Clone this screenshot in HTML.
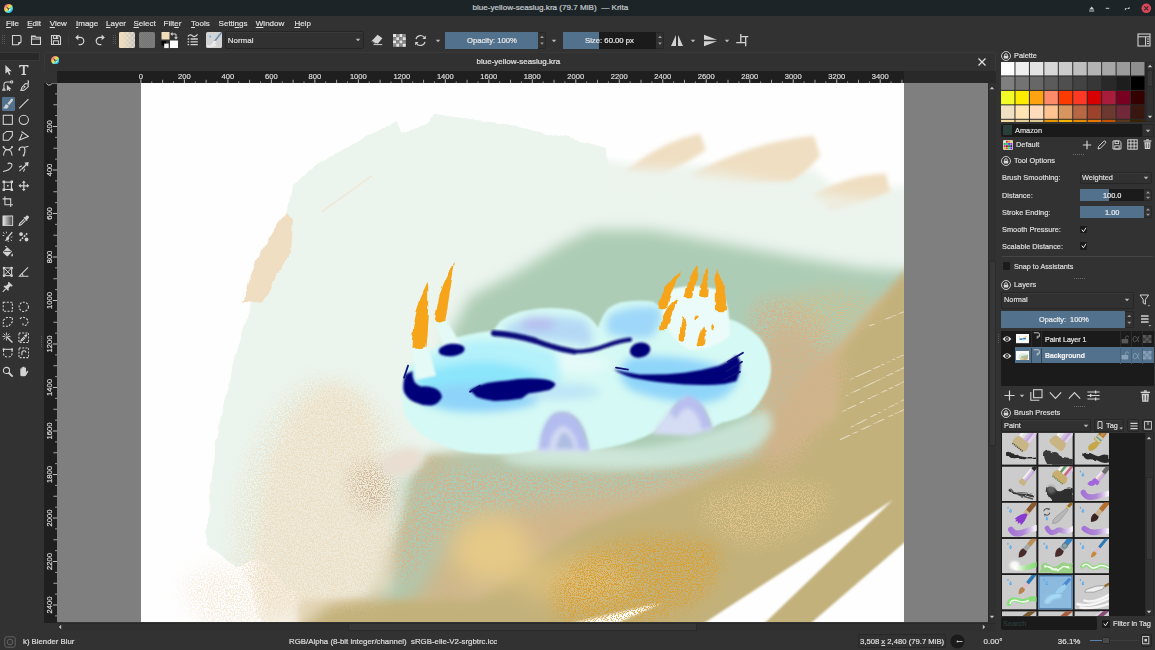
<!DOCTYPE html>
<html><head><meta charset="utf-8"><title>blue-yellow-seaslug.kra (79.7 MiB) — Krita</title>
<style>
*{box-sizing:border-box;margin:0;padding:0}
html,body{width:1155px;height:650px;overflow:hidden;background:#323232}
body{position:relative;font-family:"Liberation Sans",sans-serif;font-size:8px;color:#dedede}
.a{position:absolute}
.t{position:absolute;white-space:nowrap;line-height:12px;color:#dedede;transform:scaleX(.92);transform-origin:0 50%;-webkit-text-stroke:.22px currentColor}
#root{position:absolute;left:0;top:0;width:1155px;height:650px;opacity:.999}
svg{overflow:hidden;display:block}
u{text-decoration:underline;text-underline-offset:1px;text-decoration-thickness:0.6px}
</style></head><body><div id="root">

<div class="a" style="left:0px;top:0px;width:1155px;height:16px;background:#1d2529;"></div>
<svg class="a" style="left:3.5px;top:3.5px;" width="9" height="9" viewBox="0 0 9 9"><defs><linearGradient id="kg1" x1="0" y1="0" x2="1" y2="1"><stop offset="0" stop-color="#ff2fa0"/><stop offset=".45" stop-color="#f6e04a"/><stop offset=".7" stop-color="#30e0e8"/><stop offset="1" stop-color="#3a6cf0"/></linearGradient></defs><circle cx="4.5" cy="4.5" r="4.5" fill="url(#kg1)"/><path d="M2.025 2.475 L6.5249999999999995 5.175 L4.5 6.075 Z" fill="#2a2a3a"/><path d="M4.5 4.5 L7.2 5.8500000000000005 L5.3999999999999995 6.9750000000000005 Z" fill="#f4f4f4"/></svg>
<div class="t" style="left:472.5px;top:2.4px;font-size:8.1px;color:#c4c9cb;transform:scaleX(1);">blue-yellow-seaslug.kra (79.7 MiB) &nbsp;— Krita</div>
<svg class="a" style="left:1086px;top:2px;" width="66" height="12" viewBox="0 0 66 12"><path d="M3.2 7.6 L5.7 4.6 L8.2 7.6 Z M3.2 8.4 h5 v1 h-5z" fill="#c8cdd0"/>
<rect x="19.7" y="5.8" width="3.6" height="1" fill="#c8cdd0"/>
<path d="M39.3 4.3 h2.4 v2.4 z M43.2 8.9 h-2.4 v-2.4 z" fill="#c8cdd0" transform="rotate(90 41.2 6.6)"/>
<circle cx="60.3" cy="6.3" r="4.8" fill="#e0475a"/>
<path d="M58.3 4.3 l4 4 M62.3 4.3 l-4 4" stroke="#2a2f33" stroke-width="1.1"/></svg>
<div class="t" style="left:6px;top:17.6px;font-size:8px;color:#dedede;transform:scaleX(1);"><u>F</u>ile</div>
<div class="t" style="left:27.2px;top:17.6px;font-size:8px;color:#dedede;transform:scaleX(1);"><u>E</u>dit</div>
<div class="t" style="left:49.7px;top:17.6px;font-size:8px;color:#dedede;transform:scaleX(1);"><u>V</u>iew</div>
<div class="t" style="left:76px;top:17.6px;font-size:8px;color:#dedede;transform:scaleX(1);"><u>I</u>mage</div>
<div class="t" style="left:106px;top:17.6px;font-size:8px;color:#dedede;transform:scaleX(1);"><u>L</u>ayer</div>
<div class="t" style="left:133.5px;top:17.6px;font-size:8px;color:#dedede;transform:scaleX(1);"><u>S</u>elect</div>
<div class="t" style="left:163.6px;top:17.6px;font-size:8px;color:#dedede;transform:scaleX(1);">Filt<u>e</u>r</div>
<div class="t" style="left:191px;top:17.6px;font-size:8px;color:#dedede;transform:scaleX(1);"><u>T</u>ools</div>
<div class="t" style="left:218.6px;top:17.6px;font-size:8px;color:#dedede;transform:scaleX(1);">Setti<u>n</u>gs</div>
<div class="t" style="left:255.8px;top:17.6px;font-size:8px;color:#dedede;transform:scaleX(1);"><u>W</u>indow</div>
<div class="t" style="left:294.4px;top:17.6px;font-size:8px;color:#dedede;transform:scaleX(1);"><u>H</u>elp</div>
<svg class="a" style="left:2px;top:35px;" width="3" height="10" viewBox="0 0 3 10"><rect x="0" y="0" width="1" height="1" fill="#5a5a5a"/><rect x="2" y="0" width="1" height="1" fill="#5a5a5a"/><rect x="0" y="2" width="1" height="1" fill="#5a5a5a"/><rect x="2" y="2" width="1" height="1" fill="#5a5a5a"/><rect x="0" y="4" width="1" height="1" fill="#5a5a5a"/><rect x="2" y="4" width="1" height="1" fill="#5a5a5a"/><rect x="0" y="6" width="1" height="1" fill="#5a5a5a"/><rect x="2" y="6" width="1" height="1" fill="#5a5a5a"/><rect x="0" y="8" width="1" height="1" fill="#5a5a5a"/><rect x="2" y="8" width="1" height="1" fill="#5a5a5a"/></svg>
<svg class="a" style="left:112.5px;top:35px;" width="3" height="10" viewBox="0 0 3 10"><rect x="0" y="0" width="1" height="1" fill="#5a5a5a"/><rect x="2" y="0" width="1" height="1" fill="#5a5a5a"/><rect x="0" y="2" width="1" height="1" fill="#5a5a5a"/><rect x="2" y="2" width="1" height="1" fill="#5a5a5a"/><rect x="0" y="4" width="1" height="1" fill="#5a5a5a"/><rect x="2" y="4" width="1" height="1" fill="#5a5a5a"/><rect x="0" y="6" width="1" height="1" fill="#5a5a5a"/><rect x="2" y="6" width="1" height="1" fill="#5a5a5a"/><rect x="0" y="8" width="1" height="1" fill="#5a5a5a"/><rect x="2" y="8" width="1" height="1" fill="#5a5a5a"/></svg>
<svg class="a" style="left:11px;top:34px;" width="12" height="12" viewBox="0 0 12 12"><path d="M1.5 1.5 h7.2 a1.3 1.3 0 0 1 1.3 1.3 v5.2 l-2.8 2.8 h-5.7 z" fill="none" stroke="#d4d4d4" stroke-width="1.1"/><path d="M10 8 l-2.8 2.8 v-2.8 z" fill="#d4d4d4"/></svg>
<svg class="a" style="left:30px;top:34px;" width="12" height="12" viewBox="0 0 12 12"><path d="M1.5 2 h3.5 l1 1.2 h4.5 v7.3 h-9 z" fill="none" stroke="#d4d4d4" stroke-width="1.1"/><path d="M1.5 5 h9" stroke="#d4d4d4" stroke-width="1"/><path d="M1.5 2 h3.5 l1 1.2 h-4.5z" fill="#d4d4d4"/></svg>
<svg class="a" style="left:50px;top:34px;" width="12" height="12" viewBox="0 0 12 12"><path d="M1.5 1.5 h7.5 l1.5 1.5 v7.5 h-9 z" fill="none" stroke="#d4d4d4" stroke-width="1.1"/><rect x="3.6" y="1.5" width="4.2" height="3" fill="none" stroke="#d4d4d4" stroke-width="1"/><rect x="3.4" y="6.8" width="5" height="3.7" fill="none" stroke="#d4d4d4" stroke-width="1"/><rect x="5.8" y="2" width="1.2" height="2" fill="#d4d4d4"/></svg>
<div class="a" style="left:68px;top:35px;width:1px;height:10px;background:#3c3c3c;"></div>
<svg class="a" style="left:74px;top:33px;" width="12" height="13" viewBox="0 0 12 13"><path d="M3.2 4.4 h3 a3.6 3.6 0 0 1 0 7.2 h-1.6" fill="none" stroke="#d4d4d4" stroke-width="1.2"/><path d="M1.2 4.4 l3.2 -2.8 v5.6 z" fill="#d4d4d4"/></svg>
<svg class="a" style="left:94px;top:33px;" width="12" height="13" viewBox="0 0 12 13"><path d="M8.8 4.4 h-3 a3.6 3.6 0 0 0 0 7.2 h1.6" fill="none" stroke="#d4d4d4" stroke-width="1.2"/><path d="M10.8 4.4 l-3.2 -2.8 v5.6 z" fill="#d4d4d4"/></svg>
<svg class="a" style="left:119px;top:32px;" width="16" height="16" viewBox="0 0 16 16"><defs><pattern id="chk" width="4.8" height="4.8" patternUnits="userSpaceOnUse"><rect width="4.8" height="4.8" fill="#dedede"/><rect width="2.4" height="2.4" fill="#b2b2b2"/><rect x="2.4" y="2.4" width="2.4" height="2.4" fill="#b2b2b2"/></pattern><linearGradient id="pg" x1="0" x2="1"><stop offset="0" stop-color="#f2e0be"/><stop offset="0.25" stop-color="#f2e0be" stop-opacity=".85"/><stop offset="1" stop-color="#f2e0be" stop-opacity=".12"/></linearGradient></defs><rect width="16" height="16" rx="1.5" fill="url(#chk)"/><rect width="16" height="16" rx="1.5" fill="url(#pg)"/></svg>
<svg class="a" style="left:139px;top:32px;" width="16" height="16" viewBox="0 0 16 16"><defs><pattern id="chk2" width="2" height="2" patternUnits="userSpaceOnUse"><rect width="2" height="2" fill="#808080"/><rect width="1" height="1" fill="#767676"/><rect x="1" y="1" width="1" height="1" fill="#767676"/></pattern></defs><rect width="16" height="16" rx="1.5" fill="url(#chk2)"/></svg>
<svg class="a" style="left:161px;top:31px;" width="18" height="18" viewBox="0 0 18 18"><rect x="0.5" y="1" width="8" height="7.5" fill="#f1dfbc"/><rect x="9" y="9.5" width="8" height="7.5" fill="#ffffff"/><rect x="0.5" y="10" width="4.5" height="4.5" fill="#050505"/><rect x="3.2" y="12.6" width="4.5" height="4.5" fill="#f4f4f4"/><path d="M10.5 3 h4.5 v4" fill="none" stroke="#d4d4d4" stroke-width="1"/><path d="M9.2 3 l2.3 -2 v4 z M15 8.6 l-2 -2.3 h4 z" fill="#d4d4d4"/></svg>
<svg class="a" style="left:187px;top:33px;" width="12" height="14" viewBox="0 0 12 14"><path d="M0.8 3.4 q2.3 -2.6 4.6 -0.6 q2.3 2 5.2 -1.4" fill="none" stroke="#d4d4d4" stroke-width="1.2"/><path d="M3.6 6 h7.2 M3.6 8.8 h7.2 M3.6 11.6 h7.2" stroke="#d4d4d4" stroke-width="1.3"/><path d="M0.6 6 h1.6 M0.6 8.8 h1.6 M0.6 11.6 h1.6" stroke="#d4d4d4" stroke-width="1.3"/></svg>
<svg class="a" style="left:206px;top:32px;" width="16" height="16" viewBox="0 0 16 16"><rect width="16" height="16" rx="1.5" fill="#d4d4d4"/><path d="M15 1 L8.5 9.5" stroke="#6c8fb5" stroke-width="1.6"/><path d="M9.2 8.4 q-2.5 1 -4.5 5.6 q3.4 -1 5.6 -4.4z" fill="#f2f2f2"/><path d="M1 13.5 q4 2 9 -1" stroke="#ececec" stroke-width="1.8" fill="none"/><circle cx="4.2" cy="4.5" r="0.9" fill="#57b7f2"/></svg>
<div class="a" style="left:225px;top:31px;width:139px;height:17.5px;background:#323232;border:1px solid #262626;border-radius:2px;box-shadow:inset 0 1px 0 #3b3b3b"></div>
<div class="t" style="left:227.7px;top:34.7px;font-size:8px;color:#dedede;transform:scaleX(1);">Normal</div>
<svg class="a" style="left:354px;top:37.3px;" width="8" height="6" viewBox="0 0 8 6"><path d="M1.7000000000000002 1.85 h4.6 l-2.3 2.415 z" fill="#bcbcbc"/></svg>
<svg class="a" style="left:370px;top:34px;" width="14" height="12" viewBox="0 0 14 12"><path d="M7.6 0.8 l4.8 3.4 l-4.6 5.6 h-3.2 l-3.2 -2.6 z" fill="#d4d4d4"/><path d="M2.2 7.2 l3.2 2.6 h2" fill="none" stroke="#323232" stroke-width="0.9"/><path d="M3.6 10.6 h8.6" stroke="#d4d4d4" stroke-width="1"/></svg>
<svg class="a" style="left:393px;top:34px;" width="12.8" height="12.8" viewBox="0 0 12.8 12.8"><rect x="0.0" y="0.0" width="3.2" height="3.2" fill="#e6e6e6"/><rect x="3.2" y="0.0" width="3.2" height="3.2" fill="#8a8a8a"/><rect x="6.4" y="0.0" width="3.2" height="3.2" fill="#e6e6e6"/><rect x="9.600000000000001" y="0.0" width="3.2" height="3.2" fill="#8a8a8a"/><rect x="0.0" y="3.2" width="3.2" height="3.2" fill="#8a8a8a"/><rect x="3.2" y="3.2" width="3.2" height="3.2" fill="#e6e6e6"/><rect x="6.4" y="3.2" width="3.2" height="3.2" fill="#8a8a8a"/><rect x="9.600000000000001" y="3.2" width="3.2" height="3.2" fill="#e6e6e6"/><rect x="0.0" y="6.4" width="3.2" height="3.2" fill="#e6e6e6"/><rect x="3.2" y="6.4" width="3.2" height="3.2" fill="#8a8a8a"/><rect x="6.4" y="6.4" width="3.2" height="3.2" fill="#e6e6e6"/><rect x="9.600000000000001" y="6.4" width="3.2" height="3.2" fill="#8a8a8a"/><rect x="0.0" y="9.600000000000001" width="3.2" height="3.2" fill="#8a8a8a"/><rect x="3.2" y="9.600000000000001" width="3.2" height="3.2" fill="#e6e6e6"/><rect x="6.4" y="9.600000000000001" width="3.2" height="3.2" fill="#8a8a8a"/><rect x="9.600000000000001" y="9.600000000000001" width="3.2" height="3.2" fill="#e6e6e6"/></svg>
<svg class="a" style="left:414px;top:34px;" width="13" height="13" viewBox="0 0 13 13"><path d="M2 5.2 a4.7 4.7 0 0 1 8.6 -1.4" fill="none" stroke="#d4d4d4" stroke-width="1.2"/><path d="M11 7.8 a4.7 4.7 0 0 1 -8.6 1.4" fill="none" stroke="#d4d4d4" stroke-width="1.2"/><path d="M11.8 1.6 v3.4 h-3.4 z M1.2 11.4 v-3.4 h3.4 z" fill="#d4d4d4"/></svg>
<svg class="a" style="left:433.5px;top:37.5px;" width="8" height="6" viewBox="0 0 8 6"><path d="M1.7000000000000002 1.85 h4.6 l-2.3 2.415 z" fill="#bcbcbc"/></svg>
<div class="a" style="left:445px;top:32px;width:93px;height:16.5px;background:#53728e;"></div>
<div class="t" style="left:466.5px;top:34.7px;font-size:8px;color:#e8e8e8;transform:scaleX(0.96);">Opacity: 100%</div>
<div class="a" style="left:538px;top:32px;width:8px;height:16.5px;background:#323232;border:1px solid #292929;border-left:none;border-radius:0 2px 2px 0"></div>
<svg class="a" style="left:538px;top:32px;" width="8" height="16.5" viewBox="0 0 8 16.5"><path d="M2.0 5.9399999999999995 l2 -2.2 l2 2.2 z M2.0 10.56 l2 2.2 l2 -2.2 z" fill="#9a9a9a"/></svg>
<svg class="a" style="left:550px;top:37.5px;" width="8" height="6" viewBox="0 0 8 6"><path d="M1.7000000000000002 1.85 h4.6 l-2.3 2.415 z" fill="#bcbcbc"/></svg>
<div class="a" style="left:562.5px;top:32px;width:93.5px;height:16.5px;background:#1c1c1c;"></div>
<div class="a" style="left:562.5px;top:32px;width:36.5px;height:16.5px;background:#53728e;"></div>
<div class="t" style="left:584.5px;top:34.7px;font-size:8px;color:#e8e8e8;transform:scaleX(0.966);">Size: 60.00 px</div>
<div class="a" style="left:656px;top:32px;width:8px;height:16.5px;background:#323232;border:1px solid #292929;border-left:none;border-radius:0 2px 2px 0"></div>
<svg class="a" style="left:656px;top:32px;" width="8" height="16.5" viewBox="0 0 8 16.5"><path d="M2.0 5.9399999999999995 l2 -2.2 l2 2.2 z M2.0 10.56 l2 2.2 l2 -2.2 z" fill="#9a9a9a"/></svg>
<svg class="a" style="left:670px;top:34px;" width="14" height="13" viewBox="0 0 14 13"><path d="M6 1 v11 h-5 z" fill="#d4d4d4"/><path d="M8 1 v11 h5 z" fill="#d4d4d4"/></svg>
<svg class="a" style="left:689px;top:37.5px;" width="8" height="6" viewBox="0 0 8 6"><path d="M1.7000000000000002 1.85 h4.6 l-2.3 2.415 z" fill="#bcbcbc"/></svg>
<svg class="a" style="left:703px;top:34px;" width="15" height="13" viewBox="0 0 15 13"><path d="M1 5.7 h13 l-13 -5 z" fill="#d4d4d4"/><path d="M1 7.3 h13 l-13 5 z" fill="#d4d4d4"/></svg>
<svg class="a" style="left:722.6px;top:37.5px;" width="8" height="6" viewBox="0 0 8 6"><path d="M1.7000000000000002 1.85 h4.6 l-2.3 2.415 z" fill="#bcbcbc"/></svg>
<svg class="a" style="left:735px;top:34px;" width="14" height="13" viewBox="0 0 14 13"><path d="M5.8 0 v8.7 M1.2 8.7 h10 M5.2 2.7 h8.1 M10.7 2.7 v9.5" fill="none" stroke="#d4d4d4" stroke-width="1.3"/></svg>
<svg class="a" style="left:1137px;top:33px;" width="14" height="14" viewBox="0 0 14 14"><rect x="1" y="1" width="12" height="12" fill="none" stroke="#d4d4d4" stroke-width="1.1"/><path d="M1 3.8 h12 M8.6 3.8 v9" stroke="#d4d4d4" stroke-width="1"/><path d="M10 6 h2 M10 8.3 h2 M10 10.6 h2" stroke="#d4d4d4" stroke-width="1"/></svg>
<div class="a" style="left:0px;top:51.5px;width:39.5px;height:9px;background:#2a2a2a;border:1px solid #3a3a3a;border-left:none"></div>
<div class="a" style="left:41px;top:336px;width:1px;height:1px;background:#5c5c5c;"></div>
<div class="a" style="left:41px;top:338px;width:1px;height:1px;background:#5c5c5c;"></div>
<div class="a" style="left:41px;top:340px;width:1px;height:1px;background:#5c5c5c;"></div>
<div class="a" style="left:41px;top:342px;width:1px;height:1px;background:#5c5c5c;"></div>
<div class="a" style="left:41px;top:344px;width:1px;height:1px;background:#5c5c5c;"></div>
<div class="a" style="left:41px;top:346px;width:1px;height:1px;background:#5c5c5c;"></div>
<div class="a" style="left:1.5px;top:97px;width:13px;height:13.5px;background:#53728e;border-radius:1px"></div>
<svg class="a" style="left:2.0px;top:63.60000000000001px;" width="11.6" height="11.6" viewBox="0 0 12 12"><path d="M3.5 1 v9 l2.2 -2 l1.6 3.4 l1.4 -0.7 l-1.6 -3.2 h3 z" fill="#d4d4d4"/></svg>
<svg class="a" style="left:17.7px;top:63.60000000000001px;" width="11.6" height="11.6" viewBox="0 0 12 12"><path d="M1.2 1 h9.6 v2.6 h-0.9 q-0.2 -1.4 -1.4 -1.4 h-1.5 v7.6 q0 0.8 1.5 0.8 v0.8 h-5 v-0.8 q1.5 0 1.5 -0.8 v-7.6 h-1.5 q-1.2 0 -1.4 1.4 h-0.9 z" fill="#d4d4d4"/></svg>
<svg class="a" style="left:2.0px;top:79.7px;" width="11.6" height="11.6" viewBox="0 0 12 12"><path d="M2 10.5 v-5.5 q0 -3 3.2 -3 h4.4" fill="none" stroke="#d4d4d4" stroke-width="1.1"/><circle cx="2" cy="10.3" r="1.2" fill="none" stroke="#d4d4d4" stroke-width="1.1" stroke-width="0.8"/><circle cx="10" cy="2" r="1.2" fill="none" stroke="#d4d4d4" stroke-width="1.1" stroke-width="0.8"/><path d="M5 5 v6.4 l1.7 -1.5 l1.2 2.4 l1 -0.5 l-1.2 -2.3 h2.2 z" fill="#d4d4d4"/></svg>
<svg class="a" style="left:17.7px;top:79.7px;" width="11.6" height="11.6" viewBox="0 0 12 12"><path d="M10.5 1 l0.8 0.8 l-1.2 2 l0.6 3 l-4 3.6 l-3.9 1.2 l1.2 -3.9 l3.6 -4 l3 0.6 z" fill="none" stroke="#d4d4d4" stroke-width="1.1" stroke-width="1"/><path d="M3 11.2 l3.6 -3.8" stroke="#d4d4d4" stroke-width="0.9"/><circle cx="6.9" cy="7" r="0.9" fill="#d4d4d4"/></svg>
<svg class="a" style="left:2.0px;top:98.2px;" width="11.6" height="11.6" viewBox="0 0 12 12"><path d="M10.8 0.8 q1.2 0.8 0.3 2 l-3.6 4.4 l-1.9 -1.5 l3.6 -4.4 q0.8 -1 1.6 -0.5z" fill="#d4d4d4"/><path d="M5 6.4 l1.9 1.5 q-0.2 2.8 -3 3 q-1.8 0.2 -3 -0.6 q2 -0.6 2 -2.2 q0 -1.4 2.1 -1.7z" fill="#d4d4d4"/></svg>
<svg class="a" style="left:17.7px;top:98.2px;" width="11.6" height="11.6" viewBox="0 0 12 12"><path d="M1.2 10.8 L10.8 1.2" stroke="#d4d4d4" stroke-width="1.2"/></svg>
<svg class="a" style="left:2.0px;top:113.5px;" width="11.6" height="11.6" viewBox="0 0 12 12"><rect x="1.3" y="1.3" width="9.4" height="9.4" fill="none" stroke="#d4d4d4" stroke-width="1.1" stroke-width="1.2"/></svg>
<svg class="a" style="left:17.7px;top:113.5px;" width="11.6" height="11.6" viewBox="0 0 12 12"><circle cx="6" cy="6" r="4.8" fill="none" stroke="#d4d4d4" stroke-width="1.1" stroke-width="1.2"/></svg>
<svg class="a" style="left:2.0px;top:129.5px;" width="11.6" height="11.6" viewBox="0 0 12 12"><path d="M1.3 4.3 l3.5 -2.8 h5.9 v4.4 l-3.8 4.8 h-5.6 z" fill="none" stroke="#d4d4d4" stroke-width="1.1" stroke-width="1.2"/></svg>
<svg class="a" style="left:17.7px;top:129.5px;" width="11.6" height="11.6" viewBox="0 0 12 12"><path d="M3.6 1.6 L10.6 6.6 L1.4 10.4 L4.4 3.8" fill="none" stroke="#d4d4d4" stroke-width="1.1" stroke-width="1.2"/></svg>
<svg class="a" style="left:2.0px;top:145.2px;" width="11.6" height="11.6" viewBox="0 0 12 12"><path d="M1.6 11 q0.4 -6 4.4 -6 q4 0 4.4 6" fill="none" stroke="#d4d4d4" stroke-width="1.1" stroke-width="1.2"/><path d="M1.5 2.4 q2.2 2.6 4.5 2.6 q2.3 0 4.5 -2.6" fill="none" stroke="#d4d4d4" stroke-width="1.1" stroke-width="0.8"/><circle cx="1.6" cy="2" r="1" fill="#d4d4d4"/><circle cx="10.4" cy="2" r="1" fill="#d4d4d4"/></svg>
<svg class="a" style="left:17.7px;top:145.2px;" width="11.6" height="11.6" viewBox="0 0 12 12"><path d="M1.2 4.6 q0.6 -3 4 -2.4 q2 0.4 5.6 -1" fill="none" stroke="#d4d4d4" stroke-width="1.1" stroke-width="1.2"/><path d="M6.6 2.6 q1.6 4 -0.6 8" fill="none" stroke="#d4d4d4" stroke-width="1.1" stroke-width="1.2"/><circle cx="1.4" cy="5" r="1" fill="#d4d4d4"/><circle cx="5.8" cy="10.8" r="1" fill="#d4d4d4"/></svg>
<svg class="a" style="left:2.0px;top:161.2px;" width="11.6" height="11.6" viewBox="0 0 12 12"><path d="M1 10.8 q7 -1.2 9 -5.2 q1.2 -3 -2 -3.4 q-1.6 -0.1 -2 1" fill="none" stroke="#d4d4d4" stroke-width="1.1" stroke-width="1.2"/></svg>
<svg class="a" style="left:17.7px;top:161.2px;" width="11.6" height="11.6" viewBox="0 0 12 12"><path d="M11 1 l-0.6 4.6 l-1.4 -1.3 l-4.6 4.5 l-1 -1 l4.6 -4.5 l-1.4 -1.4 z" fill="#d4d4d4"/><path d="M1 6.4 l3 -1.4 M5.6 11 l1.4 -3 M1.4 10.6 l2.2 -2.2" stroke="#d4d4d4" stroke-width="1.1"/></svg>
<svg class="a" style="left:2.0px;top:179.89999999999998px;" width="11.6" height="11.6" viewBox="0 0 12 12"><rect x="2.2" y="2.2" width="7.6" height="7.6" fill="none" stroke="#d4d4d4" stroke-width="1.1" stroke-width="1.1"/><rect x="0.6" y="0.6" width="2.6" height="2.6" fill="#d4d4d4"/><rect x="8.8" y="0.6" width="2.6" height="2.6" fill="#d4d4d4"/><rect x="0.6" y="8.8" width="2.6" height="2.6" fill="#d4d4d4"/><rect x="8.8" y="8.8" width="2.6" height="2.6" fill="#d4d4d4"/><rect x="5.2" y="5.2" width="1.6" height="1.6" fill="#d4d4d4"/></svg>
<svg class="a" style="left:17.7px;top:179.89999999999998px;" width="11.6" height="11.6" viewBox="0 0 12 12"><path d="M6 0.4 l2 2.4 h-1.4 v2.6 h2.6 v-1.4 l2.4 2 l-2.4 2 v-1.4 h-2.6 v2.6 h1.4 l-2 2.4 l-2 -2.4 h1.4 v-2.6 h-2.6 v1.4 l-2.4 -2 l2.4 -2 v1.4 h2.6 v-2.6 h-1.4 z" fill="#d4d4d4"/></svg>
<svg class="a" style="left:2.0px;top:195.7px;" width="11.6" height="11.6" viewBox="0 0 12 12"><path d="M3 0.6 v8.4 h8.4 M0.6 3 h8.4 v8.4" fill="none" stroke="#d4d4d4" stroke-width="1.1" stroke-width="1.3"/></svg>
<svg class="a" style="left:2.0px;top:214.6px;" width="11.6" height="11.6" viewBox="0 0 12 12"><defs><linearGradient id="tg" x1="0" x2="1"><stop offset="0" stop-color="#e8e8e8"/><stop offset="1" stop-color="#444"/></linearGradient></defs><rect x="1" y="1" width="10" height="10" fill="url(#tg)" stroke="#d4d4d4" stroke-width="1"/></svg>
<svg class="a" style="left:17.7px;top:214.6px;" width="11.6" height="11.6" viewBox="0 0 12 12"><path d="M8.6 0.8 q1.6 -0.6 2.4 0.6 q0.8 1.2 -0.4 2.2 l-1.2 1 l0.6 0.7 l-0.9 0.9 l-3.4 -3.4 l0.9 -0.9 l0.7 0.6 z" fill="#d4d4d4"/><path d="M6.4 4.2 l-4.6 4.6 l-0.6 2 l2 -0.6 l4.6 -4.6" fill="none" stroke="#d4d4d4" stroke-width="1.1" stroke-width="1"/></svg>
<svg class="a" style="left:2.0px;top:230.5px;" width="11.6" height="11.6" viewBox="0 0 12 12"><path d="M10.6 1.2 l-4 4.6" stroke="#d4d4d4" stroke-width="1.4"/><path d="M6.4 5.4 q-2.4 0.4 -2 2.6 q-0.2 1.4 -1.8 1.8 q3.6 0.8 4.8 -1.6 q0.6 -1.6 -1 -2.8z" fill="#d4d4d4"/><path d="M1 1.4 l1.6 1.2 M4.4 0.6 l0.4 1.8 M0.6 4.6 l1.8 0.2 M10.8 6 l-1.6 0.6 M10.4 10.2 l-1.4 -1 M6.6 11.4 l-0.2 -1.4" stroke="#d4d4d4" stroke-width="0.9"/></svg>
<svg class="a" style="left:17.7px;top:230.5px;" width="11.6" height="11.6" viewBox="0 0 12 12"><path d="M1.8 10.2 L10.2 1.8" stroke="#d4d4d4" stroke-width="1.6" stroke-dasharray="2 1"/><circle cx="3.2" cy="3.2" r="2" fill="#d4d4d4"/><circle cx="8.8" cy="8.8" r="2" fill="#d4d4d4"/></svg>
<svg class="a" style="left:2.0px;top:246.2px;" width="11.6" height="11.6" viewBox="0 0 12 12"><path d="M5.4 1.2 l5 4.6 l-4.2 4.6 q-0.7 0.6 -1.4 0 l-3.6 -3.4 q-0.6 -0.7 0 -1.4 z" fill="#d4d4d4"/><path d="M1.8 5.6 h7.6" stroke="#323232" stroke-width="0.8"/><path d="M10.6 7.4 q1.4 2.2 0.4 3.2 q-1 0.6 -1.4 -0.6 q-0.2 -1 1 -2.6z" fill="#d4d4d4"/><path d="M5.2 1 l-2 -0.6" stroke="#d4d4d4" stroke-width="1"/></svg>
<svg class="a" style="left:2.0px;top:265.7px;" width="11.6" height="11.6" viewBox="0 0 12 12"><rect x="2" y="2" width="8" height="8" fill="none" stroke="#d4d4d4" stroke-width="1.1" stroke-width="1"/><path d="M2 2 l8 8 M10 2 l-8 8" stroke="#d4d4d4" stroke-width="1"/><circle cx="2" cy="2" r="1.3" fill="#d4d4d4"/><circle cx="10" cy="2" r="1.3" fill="#d4d4d4"/><circle cx="2" cy="10" r="1.3" fill="#d4d4d4"/><circle cx="10" cy="10" r="1.3" fill="#d4d4d4"/></svg>
<svg class="a" style="left:17.7px;top:265.7px;" width="11.6" height="11.6" viewBox="0 0 12 12"><path d="M10.4 1.4 L1.4 10.6 h9.4" fill="none" stroke="#d4d4d4" stroke-width="1.1" stroke-width="1.2"/><path d="M5.2 10.4 q0 -1.8 -1.4 -2.6" fill="none" stroke="#d4d4d4" stroke-width="1.1" stroke-width="0.9"/></svg>
<svg class="a" style="left:2.0px;top:281.2px;" width="11.6" height="11.6" viewBox="0 0 12 12"><path d="M7 0.8 l4.2 4.2 l-1 0.6 l-1.6 -0.2 l-1.8 2.2 l0.2 2 l-0.8 0.6 l-4.6 -4.6 l0.6 -0.8 l2 0.2 l2.2 -1.8 l-0.2 -1.6 z" fill="#d4d4d4"/><path d="M3.8 8.2 l-3 3" stroke="#d4d4d4" stroke-width="1.1"/></svg>
<svg class="a" style="left:2.0px;top:300.59999999999997px;" width="11.6" height="11.6" viewBox="0 0 12 12"><rect x="1.3" y="1.3" width="9.4" height="9.4" fill="none" stroke="#d4d4d4" stroke-width="1.1" stroke-width="1.2" stroke-dasharray="2.2 1.4"/></svg>
<svg class="a" style="left:17.7px;top:300.59999999999997px;" width="11.6" height="11.6" viewBox="0 0 12 12"><circle cx="6" cy="6" r="4.8" fill="none" stroke="#d4d4d4" stroke-width="1.1" stroke-width="1.2" stroke-dasharray="2.1 1.4"/></svg>
<svg class="a" style="left:2.0px;top:316.4px;" width="11.6" height="11.6" viewBox="0 0 12 12"><path d="M1.3 4.3 l3.5 -2.8 h5.9 v4.4 l-3.8 4.8 h-5.6 z" fill="none" stroke="#d4d4d4" stroke-width="1.1" stroke-width="1.2" stroke-dasharray="2.2 1.4"/></svg>
<svg class="a" style="left:17.7px;top:316.4px;" width="11.6" height="11.6" viewBox="0 0 12 12"><path d="M2 3 q3 -3 6.4 -0.6 q3.6 3 0.6 6.6 q-1.6 1.6 -3.4 0.4 q-1.4 -1.4 0.6 -2.6" fill="none" stroke="#d4d4d4" stroke-width="1.1" stroke-width="1.2" stroke-dasharray="2.2 1.4"/></svg>
<svg class="a" style="left:2.0px;top:331.59999999999997px;" width="11.6" height="11.6" viewBox="0 0 12 12"><path d="M4.6 4.6 l6.2 6.2" stroke="#d4d4d4" stroke-width="1.5"/><path d="M4.6 0.4 v3 M4.6 5.8 v3 M0.4 4.6 h3 M5.8 4.6 h3 M1.6 1.6 l2 2 M7.6 1.6 l-2 2 M1.6 7.6 l2 -2" stroke="#d4d4d4" stroke-width="0.9"/></svg>
<svg class="a" style="left:17.7px;top:331.59999999999997px;" width="11.6" height="11.6" viewBox="0 0 12 12"><rect x="1" y="1" width="10" height="10" fill="none" stroke="#d4d4d4" stroke-width="1.1" stroke-width="1.1" stroke-dasharray="2 1.4"/><path d="M8 2.4 q1 -0.4 1.5 0.4 q0.5 0.8 -0.3 1.4 l-0.6 0.5 l0.4 0.5 l-0.6 0.6 l-2.2 -2.2 l0.6 -0.6 l0.5 0.4 z" fill="#d4d4d4"/><path d="M6.6 4.8 l-3.2 3.2 l-0.4 1.3 l1.3 -0.4 l3.2 -3.2" fill="none" stroke="#d4d4d4" stroke-width="1.1" stroke-width="0.8"/></svg>
<svg class="a" style="left:2.0px;top:347.4px;" width="11.6" height="11.6" viewBox="0 0 12 12"><path d="M1.6 3 v3.4 q0 4 4.4 4 q4.4 0 4.4 -4 v-3.4" fill="none" stroke="#d4d4d4" stroke-width="1.1" stroke-width="1.2" stroke-dasharray="2.2 1.4"/><path d="M1.6 2.4 h8.8" fill="none" stroke="#d4d4d4" stroke-width="1.1" stroke-width="0.9"/><circle cx="1.6" cy="2.4" r="1.1" fill="#d4d4d4"/><circle cx="10.4" cy="2.4" r="1.1" fill="#d4d4d4"/></svg>
<svg class="a" style="left:17.7px;top:347.4px;" width="11.6" height="11.6" viewBox="0 0 12 12"><rect x="1" y="1" width="10" height="10" fill="none" stroke="#d4d4d4" stroke-width="1.1" stroke-width="1.1" stroke-dasharray="2 1.4"/><path d="M4 8.6 v-2.4 q0 -2.4 2.2 -2.4 q2 0 2 2" fill="none" stroke="#d4d4d4" stroke-width="1.1" stroke-width="1.4"/></svg>
<svg class="a" style="left:2.0px;top:366.2px;" width="11.6" height="11.6" viewBox="0 0 12 12"><circle cx="4.6" cy="4.6" r="3.2" fill="none" stroke="#d4d4d4" stroke-width="1.1" stroke-width="1.5"/><path d="M7 7 l4 4" stroke="#d4d4d4" stroke-width="2"/></svg>
<svg class="a" style="left:17.7px;top:366.2px;" width="11.6" height="11.6" viewBox="0 0 12 12"><path d="M2.4 6.8 v-3.6 q0 -0.8 0.7 -0.8 q0.7 0 0.7 0.8 v-1.4 q0 -0.8 0.7 -0.8 q0.8 0 0.8 0.8 v-0.4 q0 -0.8 0.8 -0.8 q0.7 0 0.7 0.8 v0.8 q0 -0.7 0.7 -0.7 q0.8 0 0.8 0.8 v4.4 l1 -1.4 q0.6 -0.6 1.1 -0.2 q0.4 0.4 0 1 l-2 3.6 q-0.6 1 -1.8 1 h-2.6 q-1.6 0 -1.6 -1.6 z" fill="#d4d4d4"/></svg>
<div class="a" style="left:44px;top:52px;width:952px;height:19px;background:#323232;border:1px solid #3a3a3a;border-bottom:none;border-radius:2px 2px 0 0"></div>
<svg class="a" style="left:51px;top:56px;" width="8.4" height="8.4" viewBox="0 0 8.4 8.4"><defs><linearGradient id="kg2" x1="0" y1="0" x2="1" y2="1"><stop offset="0" stop-color="#ff2fa0"/><stop offset=".45" stop-color="#f6e04a"/><stop offset=".7" stop-color="#30e0e8"/><stop offset="1" stop-color="#3a6cf0"/></linearGradient></defs><circle cx="4.2" cy="4.2" r="4.2" fill="url(#kg2)"/><path d="M1.8900000000000001 2.3100000000000005 L6.09 4.83 L4.2 5.670000000000001 Z" fill="#2a2a3a"/><path d="M4.2 4.2 L6.720000000000001 5.460000000000001 L5.04 6.510000000000001 Z" fill="#f4f4f4"/></svg>
<div class="t" style="left:476.5px;top:55.6px;font-size:8px;color:#e0e0e0;transform:scaleX(1);">blue-yellow-seaslug.kra</div>
<svg class="a" style="left:977px;top:57px;" width="10" height="10" viewBox="0 0 10 10"><path d="M1.5 1.5 l7 7 M8.5 1.5 l-7 7" stroke="#e4e4e4" stroke-width="1.2"/></svg>
<div class="a" style="left:57px;top:71px;width:939px;height:12.3px;background:#2a2a2a;"></div>
<div class="a" style="left:57px;top:71px;width:847px;height:12.3px;background:#202020;"></div>
<div class="a" style="left:44px;top:83px;width:13px;height:539.5px;background:#202020;"></div>
<svg class="a" style="left:57px;top:71px;" width="939" height="12.3" viewBox="0 0 939 12.3"><rect x="83.30" y="8.2" width="1" height="4.2" fill="#bdbdbd"/><text x="83.80" y="7.9" text-anchor="middle" font-size="7.6" fill="#dcdcdc" stroke="#dcdcdc" stroke-width="0.2" font-family="Liberation Sans, sans-serif">0</text><rect x="94.18" y="10.4" width="1" height="2" fill="#9a9a9a"/><rect x="105.05" y="8.8" width="1" height="3.6" fill="#a8a8a8"/><rect x="115.93" y="10.4" width="1" height="2" fill="#9a9a9a"/><rect x="126.80" y="8.2" width="1" height="4.2" fill="#bdbdbd"/><text x="127.30" y="7.9" text-anchor="middle" font-size="7.6" fill="#dcdcdc" stroke="#dcdcdc" stroke-width="0.2" font-family="Liberation Sans, sans-serif">200</text><rect x="137.68" y="10.4" width="1" height="2" fill="#9a9a9a"/><rect x="148.55" y="8.8" width="1" height="3.6" fill="#a8a8a8"/><rect x="159.43" y="10.4" width="1" height="2" fill="#9a9a9a"/><rect x="170.30" y="8.2" width="1" height="4.2" fill="#bdbdbd"/><text x="170.80" y="7.9" text-anchor="middle" font-size="7.6" fill="#dcdcdc" stroke="#dcdcdc" stroke-width="0.2" font-family="Liberation Sans, sans-serif">400</text><rect x="181.18" y="10.4" width="1" height="2" fill="#9a9a9a"/><rect x="192.05" y="8.8" width="1" height="3.6" fill="#a8a8a8"/><rect x="202.93" y="10.4" width="1" height="2" fill="#9a9a9a"/><rect x="213.80" y="8.2" width="1" height="4.2" fill="#bdbdbd"/><text x="214.30" y="7.9" text-anchor="middle" font-size="7.6" fill="#dcdcdc" stroke="#dcdcdc" stroke-width="0.2" font-family="Liberation Sans, sans-serif">600</text><rect x="224.68" y="10.4" width="1" height="2" fill="#9a9a9a"/><rect x="235.55" y="8.8" width="1" height="3.6" fill="#a8a8a8"/><rect x="246.43" y="10.4" width="1" height="2" fill="#9a9a9a"/><rect x="257.30" y="8.2" width="1" height="4.2" fill="#bdbdbd"/><text x="257.80" y="7.9" text-anchor="middle" font-size="7.6" fill="#dcdcdc" stroke="#dcdcdc" stroke-width="0.2" font-family="Liberation Sans, sans-serif">800</text><rect x="268.18" y="10.4" width="1" height="2" fill="#9a9a9a"/><rect x="279.05" y="8.8" width="1" height="3.6" fill="#a8a8a8"/><rect x="289.93" y="10.4" width="1" height="2" fill="#9a9a9a"/><rect x="300.80" y="8.2" width="1" height="4.2" fill="#bdbdbd"/><text x="301.30" y="7.9" text-anchor="middle" font-size="7.6" fill="#dcdcdc" stroke="#dcdcdc" stroke-width="0.2" font-family="Liberation Sans, sans-serif">1000</text><rect x="311.68" y="10.4" width="1" height="2" fill="#9a9a9a"/><rect x="322.55" y="8.8" width="1" height="3.6" fill="#a8a8a8"/><rect x="333.43" y="10.4" width="1" height="2" fill="#9a9a9a"/><rect x="344.30" y="8.2" width="1" height="4.2" fill="#bdbdbd"/><text x="344.80" y="7.9" text-anchor="middle" font-size="7.6" fill="#dcdcdc" stroke="#dcdcdc" stroke-width="0.2" font-family="Liberation Sans, sans-serif">1200</text><rect x="355.18" y="10.4" width="1" height="2" fill="#9a9a9a"/><rect x="366.05" y="8.8" width="1" height="3.6" fill="#a8a8a8"/><rect x="376.93" y="10.4" width="1" height="2" fill="#9a9a9a"/><rect x="387.80" y="8.2" width="1" height="4.2" fill="#bdbdbd"/><text x="388.30" y="7.9" text-anchor="middle" font-size="7.6" fill="#dcdcdc" stroke="#dcdcdc" stroke-width="0.2" font-family="Liberation Sans, sans-serif">1400</text><rect x="398.68" y="10.4" width="1" height="2" fill="#9a9a9a"/><rect x="409.55" y="8.8" width="1" height="3.6" fill="#a8a8a8"/><rect x="420.43" y="10.4" width="1" height="2" fill="#9a9a9a"/><rect x="431.30" y="8.2" width="1" height="4.2" fill="#bdbdbd"/><text x="431.80" y="7.9" text-anchor="middle" font-size="7.6" fill="#dcdcdc" stroke="#dcdcdc" stroke-width="0.2" font-family="Liberation Sans, sans-serif">1600</text><rect x="442.18" y="10.4" width="1" height="2" fill="#9a9a9a"/><rect x="453.05" y="8.8" width="1" height="3.6" fill="#a8a8a8"/><rect x="463.92" y="10.4" width="1" height="2" fill="#9a9a9a"/><rect x="474.80" y="8.2" width="1" height="4.2" fill="#bdbdbd"/><text x="475.30" y="7.9" text-anchor="middle" font-size="7.6" fill="#dcdcdc" stroke="#dcdcdc" stroke-width="0.2" font-family="Liberation Sans, sans-serif">1800</text><rect x="485.67" y="10.4" width="1" height="2" fill="#9a9a9a"/><rect x="496.55" y="8.8" width="1" height="3.6" fill="#a8a8a8"/><rect x="507.42" y="10.4" width="1" height="2" fill="#9a9a9a"/><rect x="518.30" y="8.2" width="1" height="4.2" fill="#bdbdbd"/><text x="518.80" y="7.9" text-anchor="middle" font-size="7.6" fill="#dcdcdc" stroke="#dcdcdc" stroke-width="0.2" font-family="Liberation Sans, sans-serif">2000</text><rect x="529.17" y="10.4" width="1" height="2" fill="#9a9a9a"/><rect x="540.05" y="8.8" width="1" height="3.6" fill="#a8a8a8"/><rect x="550.92" y="10.4" width="1" height="2" fill="#9a9a9a"/><rect x="561.80" y="8.2" width="1" height="4.2" fill="#bdbdbd"/><text x="562.30" y="7.9" text-anchor="middle" font-size="7.6" fill="#dcdcdc" stroke="#dcdcdc" stroke-width="0.2" font-family="Liberation Sans, sans-serif">2200</text><rect x="572.67" y="10.4" width="1" height="2" fill="#9a9a9a"/><rect x="583.55" y="8.8" width="1" height="3.6" fill="#a8a8a8"/><rect x="594.42" y="10.4" width="1" height="2" fill="#9a9a9a"/><rect x="605.30" y="8.2" width="1" height="4.2" fill="#bdbdbd"/><text x="605.80" y="7.9" text-anchor="middle" font-size="7.6" fill="#dcdcdc" stroke="#dcdcdc" stroke-width="0.2" font-family="Liberation Sans, sans-serif">2400</text><rect x="616.17" y="10.4" width="1" height="2" fill="#9a9a9a"/><rect x="627.05" y="8.8" width="1" height="3.6" fill="#a8a8a8"/><rect x="637.92" y="10.4" width="1" height="2" fill="#9a9a9a"/><rect x="648.80" y="8.2" width="1" height="4.2" fill="#bdbdbd"/><text x="649.30" y="7.9" text-anchor="middle" font-size="7.6" fill="#dcdcdc" stroke="#dcdcdc" stroke-width="0.2" font-family="Liberation Sans, sans-serif">2600</text><rect x="659.67" y="10.4" width="1" height="2" fill="#9a9a9a"/><rect x="670.55" y="8.8" width="1" height="3.6" fill="#a8a8a8"/><rect x="681.42" y="10.4" width="1" height="2" fill="#9a9a9a"/><rect x="692.30" y="8.2" width="1" height="4.2" fill="#bdbdbd"/><text x="692.80" y="7.9" text-anchor="middle" font-size="7.6" fill="#dcdcdc" stroke="#dcdcdc" stroke-width="0.2" font-family="Liberation Sans, sans-serif">2800</text><rect x="703.17" y="10.4" width="1" height="2" fill="#9a9a9a"/><rect x="714.05" y="8.8" width="1" height="3.6" fill="#a8a8a8"/><rect x="724.92" y="10.4" width="1" height="2" fill="#9a9a9a"/><rect x="735.80" y="8.2" width="1" height="4.2" fill="#bdbdbd"/><text x="736.30" y="7.9" text-anchor="middle" font-size="7.6" fill="#dcdcdc" stroke="#dcdcdc" stroke-width="0.2" font-family="Liberation Sans, sans-serif">3000</text><rect x="746.67" y="10.4" width="1" height="2" fill="#9a9a9a"/><rect x="757.55" y="8.8" width="1" height="3.6" fill="#a8a8a8"/><rect x="768.42" y="10.4" width="1" height="2" fill="#9a9a9a"/><rect x="779.30" y="8.2" width="1" height="4.2" fill="#bdbdbd"/><text x="779.80" y="7.9" text-anchor="middle" font-size="7.6" fill="#dcdcdc" stroke="#dcdcdc" stroke-width="0.2" font-family="Liberation Sans, sans-serif">3200</text><rect x="790.17" y="10.4" width="1" height="2" fill="#9a9a9a"/><rect x="801.05" y="8.8" width="1" height="3.6" fill="#a8a8a8"/><rect x="811.92" y="10.4" width="1" height="2" fill="#9a9a9a"/><rect x="822.80" y="8.2" width="1" height="4.2" fill="#bdbdbd"/><text x="823.30" y="7.9" text-anchor="middle" font-size="7.6" fill="#dcdcdc" stroke="#dcdcdc" stroke-width="0.2" font-family="Liberation Sans, sans-serif">3400</text><rect x="833.67" y="10.4" width="1" height="2" fill="#9a9a9a"/><rect x="844.55" y="8.8" width="1" height="3.6" fill="#a8a8a8"/></svg>
<svg class="a" style="left:44px;top:83px;" width="13" height="539.5" viewBox="0 0 13 539.5"><rect x="8.8" y="-0.50" width="4.2" height="1" fill="#bdbdbd"/><rect x="11" y="10.38" width="2" height="1" fill="#9a9a9a"/><rect x="9.4" y="21.25" width="3.6" height="1" fill="#a8a8a8"/><rect x="11" y="32.12" width="2" height="1" fill="#9a9a9a"/><rect x="8.8" y="43.00" width="4.2" height="1" fill="#bdbdbd"/><text transform="translate(7.6,43.50) rotate(-90)" text-anchor="middle" font-size="7.6" fill="#dcdcdc" stroke="#dcdcdc" stroke-width="0.2" font-family="Liberation Sans, sans-serif">200</text><rect x="11" y="53.88" width="2" height="1" fill="#9a9a9a"/><rect x="9.4" y="64.75" width="3.6" height="1" fill="#a8a8a8"/><rect x="11" y="75.62" width="2" height="1" fill="#9a9a9a"/><rect x="8.8" y="86.50" width="4.2" height="1" fill="#bdbdbd"/><text transform="translate(7.6,87.00) rotate(-90)" text-anchor="middle" font-size="7.6" fill="#dcdcdc" stroke="#dcdcdc" stroke-width="0.2" font-family="Liberation Sans, sans-serif">400</text><rect x="11" y="97.38" width="2" height="1" fill="#9a9a9a"/><rect x="9.4" y="108.25" width="3.6" height="1" fill="#a8a8a8"/><rect x="11" y="119.12" width="2" height="1" fill="#9a9a9a"/><rect x="8.8" y="130.00" width="4.2" height="1" fill="#bdbdbd"/><text transform="translate(7.6,130.50) rotate(-90)" text-anchor="middle" font-size="7.6" fill="#dcdcdc" stroke="#dcdcdc" stroke-width="0.2" font-family="Liberation Sans, sans-serif">600</text><rect x="11" y="140.88" width="2" height="1" fill="#9a9a9a"/><rect x="9.4" y="151.75" width="3.6" height="1" fill="#a8a8a8"/><rect x="11" y="162.62" width="2" height="1" fill="#9a9a9a"/><rect x="8.8" y="173.50" width="4.2" height="1" fill="#bdbdbd"/><text transform="translate(7.6,174.00) rotate(-90)" text-anchor="middle" font-size="7.6" fill="#dcdcdc" stroke="#dcdcdc" stroke-width="0.2" font-family="Liberation Sans, sans-serif">800</text><rect x="11" y="184.38" width="2" height="1" fill="#9a9a9a"/><rect x="9.4" y="195.25" width="3.6" height="1" fill="#a8a8a8"/><rect x="11" y="206.12" width="2" height="1" fill="#9a9a9a"/><rect x="8.8" y="217.00" width="4.2" height="1" fill="#bdbdbd"/><text transform="translate(7.6,217.50) rotate(-90)" text-anchor="middle" font-size="7.6" fill="#dcdcdc" stroke="#dcdcdc" stroke-width="0.2" font-family="Liberation Sans, sans-serif">1000</text><rect x="11" y="227.88" width="2" height="1" fill="#9a9a9a"/><rect x="9.4" y="238.75" width="3.6" height="1" fill="#a8a8a8"/><rect x="11" y="249.62" width="2" height="1" fill="#9a9a9a"/><rect x="8.8" y="260.50" width="4.2" height="1" fill="#bdbdbd"/><text transform="translate(7.6,261.00) rotate(-90)" text-anchor="middle" font-size="7.6" fill="#dcdcdc" stroke="#dcdcdc" stroke-width="0.2" font-family="Liberation Sans, sans-serif">1200</text><rect x="11" y="271.38" width="2" height="1" fill="#9a9a9a"/><rect x="9.4" y="282.25" width="3.6" height="1" fill="#a8a8a8"/><rect x="11" y="293.12" width="2" height="1" fill="#9a9a9a"/><rect x="8.8" y="304.00" width="4.2" height="1" fill="#bdbdbd"/><text transform="translate(7.6,304.50) rotate(-90)" text-anchor="middle" font-size="7.6" fill="#dcdcdc" stroke="#dcdcdc" stroke-width="0.2" font-family="Liberation Sans, sans-serif">1400</text><rect x="11" y="314.88" width="2" height="1" fill="#9a9a9a"/><rect x="9.4" y="325.75" width="3.6" height="1" fill="#a8a8a8"/><rect x="11" y="336.62" width="2" height="1" fill="#9a9a9a"/><rect x="8.8" y="347.50" width="4.2" height="1" fill="#bdbdbd"/><text transform="translate(7.6,348.00) rotate(-90)" text-anchor="middle" font-size="7.6" fill="#dcdcdc" stroke="#dcdcdc" stroke-width="0.2" font-family="Liberation Sans, sans-serif">1600</text><rect x="11" y="358.38" width="2" height="1" fill="#9a9a9a"/><rect x="9.4" y="369.25" width="3.6" height="1" fill="#a8a8a8"/><rect x="11" y="380.12" width="2" height="1" fill="#9a9a9a"/><rect x="8.8" y="391.00" width="4.2" height="1" fill="#bdbdbd"/><text transform="translate(7.6,391.50) rotate(-90)" text-anchor="middle" font-size="7.6" fill="#dcdcdc" stroke="#dcdcdc" stroke-width="0.2" font-family="Liberation Sans, sans-serif">1800</text><rect x="11" y="401.88" width="2" height="1" fill="#9a9a9a"/><rect x="9.4" y="412.75" width="3.6" height="1" fill="#a8a8a8"/><rect x="11" y="423.62" width="2" height="1" fill="#9a9a9a"/><rect x="8.8" y="434.50" width="4.2" height="1" fill="#bdbdbd"/><text transform="translate(7.6,435.00) rotate(-90)" text-anchor="middle" font-size="7.6" fill="#dcdcdc" stroke="#dcdcdc" stroke-width="0.2" font-family="Liberation Sans, sans-serif">2000</text><rect x="11" y="445.38" width="2" height="1" fill="#9a9a9a"/><rect x="9.4" y="456.25" width="3.6" height="1" fill="#a8a8a8"/><rect x="11" y="467.12" width="2" height="1" fill="#9a9a9a"/><rect x="8.8" y="478.00" width="4.2" height="1" fill="#bdbdbd"/><text transform="translate(7.6,478.50) rotate(-90)" text-anchor="middle" font-size="7.6" fill="#dcdcdc" stroke="#dcdcdc" stroke-width="0.2" font-family="Liberation Sans, sans-serif">2200</text><rect x="11" y="488.88" width="2" height="1" fill="#9a9a9a"/><rect x="9.4" y="499.75" width="3.6" height="1" fill="#a8a8a8"/><rect x="11" y="510.62" width="2" height="1" fill="#9a9a9a"/><rect x="8.8" y="521.50" width="4.2" height="1" fill="#bdbdbd"/><text transform="translate(7.6,522.00) rotate(-90)" text-anchor="middle" font-size="7.6" fill="#dcdcdc" stroke="#dcdcdc" stroke-width="0.2" font-family="Liberation Sans, sans-serif">2400</text><rect x="11" y="532.38" width="2" height="1" fill="#9a9a9a"/><path d="M2.5 0.5 q1.8 2.6 4.2 1.2 q1.2 -0.8 1.6 -1.4" fill="none" stroke="#dcdcdc" stroke-width="0.9"/></svg>
<div class="a" style="left:57px;top:83.3px;width:931px;height:539.2px;background:#808080;"></div>
<div class="a" style="left:988px;top:83.3px;width:8.3px;height:539.2px;background:#313131;border-left:1px solid #2a2a2a"></div>
<div class="a" style="left:989px;top:261px;width:7px;height:185px;background:#383838;border:1px solid #2b2b2b;border-radius:1px"></div>
<svg class="a" style="left:988px;top:84px;" width="8" height="8" viewBox="0 0 8 8"><path d="M1.8 5.2 l2.2 -2.4 l2.2 2.4 z" fill="#c8c8c8"/></svg>
<svg class="a" style="left:988px;top:613px;" width="8" height="8" viewBox="0 0 8 8"><path d="M1.8 2.8 l2.2 2.4 l2.2 -2.4 z" fill="#c8c8c8"/></svg>
<div class="a" style="left:57px;top:622.6px;width:939px;height:8px;background:#313131;border-top:1px solid #2a2a2a"></div>
<div class="a" style="left:347.5px;top:623.2px;width:349px;height:7.4px;background:#383838;border:1px solid #2b2b2b;border-radius:1px"></div>
<svg class="a" style="left:56px;top:623px;" width="8" height="8" viewBox="0 0 8 8"><path d="M5.2 1.8 l-2.4 2.2 l2.4 2.2 z" fill="#c8c8c8"/></svg>
<svg class="a" style="left:979.5px;top:623px;" width="8" height="8" viewBox="0 0 8 8"><path d="M2.8 1.8 l2.4 2.2 l-2.4 2.2 z" fill="#c8c8c8"/></svg>
<svg class="a" style="left:141px;top:83.3px" width="763" height="539.2" viewBox="141 83.3 763 539.2"><defs>
<filter id="b1" x="-20%" y="-20%" width="140%" height="140%"><feGaussianBlur stdDeviation="1"/></filter>
<filter id="b2" x="-20%" y="-20%" width="140%" height="140%"><feGaussianBlur stdDeviation="2.2"/></filter>
<filter id="b4" x="-20%" y="-20%" width="140%" height="140%"><feGaussianBlur stdDeviation="4"/></filter>
<filter id="b7" x="-30%" y="-30%" width="160%" height="160%"><feGaussianBlur stdDeviation="7"/></filter>
<filter id="b12" x="-40%" y="-40%" width="180%" height="180%"><feGaussianBlur stdDeviation="12"/></filter>
<filter id="rough" x="-10%" y="-10%" width="120%" height="120%"><feTurbulence type="fractalNoise" baseFrequency="0.05" numOctaves="3" seed="4" result="n"/><feDisplacementMap in="SourceGraphic" in2="n" scale="6" xChannelSelector="R" yChannelSelector="G"/><feGaussianBlur stdDeviation="0.7"/></filter>
<filter id="rough2" x="-10%" y="-10%" width="120%" height="120%"><feTurbulence type="fractalNoise" baseFrequency="0.06" numOctaves="2" seed="9" result="n"/><feDisplacementMap in="SourceGraphic" in2="n" scale="6" xChannelSelector="R" yChannelSelector="G"/><feGaussianBlur stdDeviation="0.5"/></filter>
<filter id="speck" x="-20%" y="-20%" width="140%" height="140%"><feGaussianBlur in="SourceGraphic" stdDeviation="9" result="bl"/><feTurbulence type="fractalNoise" baseFrequency="0.85" numOctaves="2" seed="3" result="n"/><feColorMatrix in="n" type="matrix" values="0 0 0 0 0  0 0 0 0 0  0 0 0 0 0  0 0 0 9 -4.3" result="dots"/><feComposite in="bl" in2="dots" operator="in"/></filter>
<filter id="speck2" x="-20%" y="-20%" width="140%" height="140%"><feGaussianBlur in="SourceGraphic" stdDeviation="10" result="bl"/><feTurbulence type="fractalNoise" baseFrequency="0.7" numOctaves="2" seed="11" result="n"/><feColorMatrix in="n" type="matrix" values="0 0 0 0 0  0 0 0 0 0  0 0 0 0 0  0 0 0 7 -3.0" result="dots"/><feComposite in="bl" in2="dots" operator="in"/></filter>
<filter id="spk50" x="-20%" y="-20%" width="140%" height="140%"><feGaussianBlur in="SourceGraphic" stdDeviation="8" result="bl"/><feTurbulence type="fractalNoise" baseFrequency="0.55" numOctaves="2" seed="21" result="n"/><feColorMatrix in="n" type="matrix" values="0 0 0 0 0  0 0 0 0 0  0 0 0 0 0  0 0 0 8 -3.6" result="dots"/><feComposite in="bl" in2="dots" operator="in"/></filter>
<filter id="streak" x="-10%" y="-10%" width="120%" height="120%"><feTurbulence type="fractalNoise" baseFrequency="0.02 0.5" numOctaves="2" seed="5" result="n"/><feColorMatrix in="n" type="matrix" values="0 0 0 0 0  0 0 0 0 0  0 0 0 0 0  0 0 0 6 -2.2" result="m"/><feComposite in="SourceGraphic" in2="m" operator="in"/></filter>
</defs>
<rect x="141" y="83" width="763" height="540" fill="#ffffff"/>
<g filter="url(#rough)">
<path d="M206 566 L208 517 L215 443 L230 377 L250 307 L262 270 L287 215 L292 186 L322 161 L397 121 L400 132 L428 124 L433 114 L523 127 L607 148 L608 166 L640 190 L910 215 L910 630 L330 630 L300 600 L262 560 L240 566 Z" fill="#ecf5ee"/>
</g>
<g filter="url(#b4)"><path d="M604 160 L640 168 L700 166 L760 172 L815 170 L840 194 L910 186 L910 230 L604 200 Z" fill="#ecf5ee"/></g>
<g filter="url(#rough2)">
<path d="M242 302 L256 262 L276 228 L286 213 L292 222 L290 252 L274 282 L262 304 Z" fill="#f0dfc2"/>
</g>
<path d="M322 212 L372 176" stroke="#f3e6d2" stroke-width="1.6" opacity=".8"/>
<g filter="url(#b2)">
<path d="M625 172 Q660 142 700 134 L706 150 Q690 162 660 176 Z" fill="#f0dfc2"/>
<path d="M690 176 Q750 142 814 136 L820 156 Q808 172 790 182 Q750 184 705 188 Z" fill="#f0dfc2"/>
<path d="M812 196 Q850 174 886 174 L890 192 Q866 204 832 210 Z" fill="#f0dfc2"/>
</g>
<g filter="url(#b7)"><path d="M600 170 Q700 165 800 190 Q860 205 904 200 L904 215 L600 195 Z" fill="#eef5ef"/></g>
<g filter="url(#b7)">
<path d="M448 338 L470 297 L514 274 L563 244 L592 230 L650 230 L720 243 L800 258 L860 268 L915 272 L915 470 L740 470 L600 450 L450 420 Z" fill="#aecdb6"/>
</g>

<g filter="url(#b4)">
<path d="M910 268 L832 350 L800 380 L775 420 L760 445 L700 462 L640 465 L560 462 L480 455 L428 455 L412 480 L404 520 L386 562 L368 596 L300 602 L300 630 L910 630 Z" fill="#cfb88c"/>
</g>
<g filter="url(#b12)">
<path d="M408 474 L470 452 L600 462 L700 458 L768 434 L756 466 L640 494 L540 504 L470 522 L436 556 L410 602 L366 602 L388 560 L404 520 Z" fill="#a8cdb9"/>
</g>
<path d="M420 462 L560 470 L700 466 L760 440 L770 470 L700 520 L560 545 L440 545 L400 590 L380 560 L410 500 Z" fill="#d4b48c" filter="url(#spk50)"/>
<g filter="url(#b4)">
<path d="M910 268 L834 362 L838 416 L760 460 L680 492 L584 527 L520 570 L480 600 L300 603 L300 630 L910 630 Z" fill="#c3b27c"/>
</g>
<g filter="url(#b12)">
<ellipse cx="492" cy="550" rx="40" ry="34" fill="#e6ca88"/>
<ellipse cx="575" cy="580" rx="60" ry="24" fill="#dcc080" opacity=".9"/>
</g>
<g filter="url(#b7)">
<path d="M268 470 Q300 380 340 385 Q375 400 378 450 Q400 520 390 592 L330 604 L300 630 L262 630 Q248 560 268 470 Z" fill="#f2e8d6" opacity=".7"/>
</g>
<path d="M235 520 Q250 410 310 380 Q370 370 398 440 Q410 520 385 605 L280 615 Q225 590 235 520Z" fill="#e8cfa6" filter="url(#speck2)" opacity=".4"/>
<path d="M350 470 Q380 450 395 480 Q400 510 370 515 Q345 505 350 470Z" fill="#b89878" filter="url(#speck)" opacity=".6"/>
<g filter="url(#b4)"><ellipse cx="402" cy="462" rx="22" ry="13" fill="#eadfd2" transform="rotate(-20 402 462)"/></g>
<g filter="url(#b1)">
<path d="M893 500 L700 626 L762 626 Z" fill="#ffffff"/>
<path d="M910 538 L808 626 L910 626 Z" fill="#ffffff"/>
<path d="M560 626 L662 603 L612 626 Z" fill="#ffffff"/>
</g>
<g filter="url(#rough2)"><path d="M141 535 L207 545 L226 560 L246 574 L252 600 L264 630 L141 630 Z" fill="#ffffff"/></g>
<path d="M180 585 Q220 550 262 580 Q275 600 270 630 L205 630Z" fill="#e8cfa6" filter="url(#speck2)" opacity=".35"/>
<g opacity=".55"><path d="M850 380 L904 355 M846 396 L904 368 M842 412 L904 382 M850 428 L904 400 M840 440 L904 410 M860 330 L904 312" stroke="#ffffff" stroke-width="1.1" filter="url(#streak)"/></g>
<path d="M700 500 Q760 470 830 490 Q830 530 760 545 Q700 545 700 500Z" fill="#e6c78c" filter="url(#speck)" opacity=".9"/>
<path d="M575 560 Q640 520 720 545 Q730 600 650 622 L560 626 Q540 590 575 560Z" fill="#dba032" filter="url(#speck)"/>
<path d="M780 300 Q840 280 880 300 Q850 340 800 350 Q770 330 780 300Z" fill="#e6b878" filter="url(#speck)" opacity=".8"/>
<path d="M770 330 Q810 320 835 380 Q810 450 775 470 Q750 400 770 330Z" fill="#cdb48c" filter="url(#b7)" opacity=".7"/><path d="M755 300 Q820 290 850 370 Q820 460 770 480 Q735 400 755 300Z" fill="#d4b48c" filter="url(#spk50)"/>
<g filter="url(#b4)" opacity=".8"><path d="M500 456 Q540 446 600 452 Q690 448 765 410 Q785 430 750 452 Q650 478 560 468 Q510 470 500 456Z" fill="#cfe9dd"/></g>
<g filter="url(#b1)">
<path d="M402 388 Q403 372 410 365 Q435 345 459 337 Q480 332 494 331 Q498 322 504 319 Q516 312 528 310.5 Q546 307 563 309 Q578 310 587 316 Q594 321 598 328 Q602 316 608 309 Q616 303 625 302 Q640 300 653 302 Q660 306 664 312 Q664 300 667 292 Q695 284 722 292 Q727 304 728 319 Q740 322 750 330 Q762 338 767 350 Q771 360 771 371 Q770 385 764 395 Q758 406 750 413 Q738 420 722 423 L712 428 Q708 414 702 406 Q694 396 684 397 Q676 402 670 413 Q664 426 653 433 Q634 443 612 447 L589 451 Q588 440 584 430 Q577 416 567 413 Q559 412 553 416 Q546 424 542 437 L539 449 Q522 454 504 454 Q480 455 459 451 Q440 446 425 437 Q410 426 404 413 Q401 400 402 388 Z" fill="#d6faf5"/>
</g>
<g filter="url(#b4)">
<path d="M410 372 Q440 346 480 340 Q530 340 560 356 Q570 380 540 400 Q500 416 450 412 Q412 402 410 372Z" fill="#b4f2fc"/><path d="M414 380 Q440 362 490 362 Q540 368 548 384 Q530 404 480 408 Q430 408 414 380Z" fill="#8ce6fc"/>
<ellipse cx="480" cy="398" rx="60" ry="14" fill="#8fd4fa"/>
<path d="M506 326 Q540 312 585 320 Q596 336 590 346 Q550 340 506 336Z" fill="#b6daf6"/>
<ellipse cx="538" cy="324" rx="18" ry="7" fill="#b6c0f0"/>
<path d="M608 316 Q630 304 660 308 Q664 326 650 338 Q620 340 606 332Z" fill="#9fd8fa"/>
<path d="M630 358 Q680 352 740 372 Q736 400 700 404 Q660 402 630 390 Q610 372 630 358Z" fill="#90d6fb"/>
<path d="M556 350 Q590 352 612 364 Q600 376 560 372Z" fill="#e6fbfa"/>
<ellipse cx="560" cy="392" rx="40" ry="8" fill="#bfe6f8"/>
</g>
<g filter="url(#b2)">
<path d="M537 452 L546 424 L556 412 L570 412 L582 426 L590 452 Z" fill="#d4dcf4"/>
<path d="M652 434 L668 412 L684 396 L700 402 L714 430 L690 436 Z" fill="#d6def5"/>
<path d="M539 449 Q541 424 553 414 Q566 408 578 420 Q586 432 589 451 L578 449 Q576 432 564 426 Q552 428 549 449 Z" fill="#b4bdf0"/>
<path d="M670 413 Q678 398 690 396 Q704 400 712 428 L702 430 Q698 412 688 408 Q680 410 676 420 Z" fill="#b9c0f0"/>
<path d="M556 449 Q558 436 564 432 Q572 436 574 449Z" fill="#9fb0dc" opacity=".7"/>
</g>
<g filter="url(#b1)">
<path d="M411 346 L428 346 L436 376 L416 380 Z" fill="#e4fbf7"/>
<path d="M435 320 L446 320 L462 346 L444 350 Z" fill="#e4fbf7"/>
<path d="M662 312 Q664 296 670 290 Q695 282 722 292 Q730 310 730 336 Q710 352 690 350 Q668 340 662 312 Z" fill="#ecfcfa"/>
</g>
<g filter="url(#b1)" fill="#06067a">
<ellipse cx="451.6" cy="350.4" rx="13" ry="6.2" transform="rotate(-6 451 350)"/>
<path d="M405.6 374.7 Q402 384 403.9 392 Q407 399 414.2 402.4 Q423 406.5 431.6 405.8 Q439 404 442 397.2 Q441 391 435 388.5 Q428 386 421.2 386.8 Q416 385 414.2 381.6 Q412 376 412.5 371.2 Z"/>
<path d="M469.7 390.3 Q478 385.5 487 383.3 Q497 381.5 507.7 380.9 Q518 379 528.5 378.8 Q538 378.5 545.8 379.9 Q553 381 555.5 384.4 Q554 388.5 549.3 390.3 Q539 392.5 528.5 393.7 L521.6 398.9 Q508 401.5 493.9 401.3 Q484 400 476.6 397.2 Z"/>
<ellipse cx="640" cy="350.4" rx="10.4" ry="7.4" transform="rotate(-12 640 350)"/>
<path d="M613.4 369.5 Q626 373 639.4 374.7 Q662 375.5 684.4 373 Q703 370.5 719 366 Q729 362 736.3 355.6 Q740 359 740.5 364.3 Q740 374 736.3 381.6 Q727 384.5 715.5 385 Q690 386 667 383.3 Q648 381.5 632.4 378.1 Q621 374.5 613.4 369.5 Z"/>
</g>
<g fill="none" stroke="#10107c" stroke-linecap="round" filter="url(#b1)">
<path d="M494 333.5 Q516 335 535 341" stroke-width="6"/>
<path d="M535 341 Q556 349 574 352" stroke-width="5.4"/>
<path d="M574 352 Q592 352 606 346 Q620 341 630 340" stroke-width="4.2"/>
</g>
<g fill="none" stroke="#10107c" stroke-linecap="round">
<path d="M728 362 L743 353 M726 372 L742 362 M724 380 L740 372" stroke-width="1.8"/>
<path d="M404 378 L408 366 M470 392 L480 386 M616 368 L628 370" stroke-width="1.8"/>
</g>
<g fill="#f7a61c" filter="url(#rough2)">
<path d="M411.5 347 Q412.5 312 428 282 Q429 312 425.5 348 Q418 351 411.5 347Z"/>
<path d="M435 321 Q438 288 454.8 263 Q449 296 445.4 322 Q440 326 435 321Z"/>
<path d="M658.4 308 Q661 286 681 270 Q671 292 667 308 Q662 311 658.4 308Z"/>
<path d="M684.4 297 Q689 276 698 265.6 Q697 284 693 298 Q688 300 684.4 297Z"/>
<path d="M700 296 Q702 278 706 267 Q710 284 708 297 Q704 299 700 296Z"/>
<path d="M715 310 Q714 284 717 269 Q726 290 725 310 Q720 313 715 310Z"/>
<path d="M660 328 Q663 308 677.4 298.5 Q673 314 668 328 Q664 331 660 328Z"/>
<path d="M679.6 340 Q680 324 682.6 315.8 Q686 328 685 340 Q682 342 679.6 340Z"/>
<path d="M696.6 345 Q698 334 703.4 327.6 Q706 336 703.4 345.4 Q700 347 696.6 345Z"/>
<ellipse cx="696" cy="318" rx="3" ry="1.8" transform="rotate(-30 696 318)"/>
<ellipse cx="712" cy="328" rx="1.7" ry="2.6"/>
</g>
</svg>
<svg class="a" style="left:999.8px;top:50px;" width="12" height="12" viewBox="0 0 12 12"><circle cx="6" cy="6" r="4.5" fill="none" stroke="#d8d8d8" stroke-width="0.9"/><rect x="3.8" y="5.7" width="4.4" height="2.8" rx="0.5" fill="#d8d8d8"/><path d="M4.6 5.9 v-0.8 a1.4 1.4 0 0 1 2.8 0 v0.8" fill="none" stroke="#d8d8d8" stroke-width="0.9"/></svg>
<div class="t" style="left:1014.4px;top:50.4px;font-size:8px;color:#dedede;">Palette</div>
<div class="a" style="left:1000.5px;top:61.5px;width:145px;height:60.2px;background:#2b2b2b;"></div>
<svg class="a" style="left:1000.8px;top:62px;" width="144.5" height="59.7" viewBox="0 0 144.5 59.7"><rect x="0.00" y="0.00" width="13.45" height="13.45" fill="#ffffff"/><rect x="14.45" y="0.00" width="13.45" height="13.45" fill="#f0f0f0"/><rect x="28.90" y="0.00" width="13.45" height="13.45" fill="#e4e4e4"/><rect x="43.35" y="0.00" width="13.45" height="13.45" fill="#d8d8d8"/><rect x="57.80" y="0.00" width="13.45" height="13.45" fill="#cccccc"/><rect x="72.25" y="0.00" width="13.45" height="13.45" fill="#c0c0c0"/><rect x="86.70" y="0.00" width="13.45" height="13.45" fill="#b4b4b4"/><rect x="101.15" y="0.00" width="13.45" height="13.45" fill="#a8a8a8"/><rect x="115.60" y="0.00" width="13.45" height="13.45" fill="#9c9c9c"/><rect x="130.05" y="0.00" width="13.45" height="13.45" fill="#909090"/><rect x="0.00" y="14.45" width="13.45" height="13.45" fill="#808080"/><rect x="14.45" y="14.45" width="13.45" height="13.45" fill="#747474"/><rect x="28.90" y="14.45" width="13.45" height="13.45" fill="#686868"/><rect x="43.35" y="14.45" width="13.45" height="13.45" fill="#5c5c5c"/><rect x="57.80" y="14.45" width="13.45" height="13.45" fill="#505050"/><rect x="72.25" y="14.45" width="13.45" height="13.45" fill="#444444"/><rect x="86.70" y="14.45" width="13.45" height="13.45" fill="#383838"/><rect x="101.15" y="14.45" width="13.45" height="13.45" fill="#2a2a2a"/><rect x="115.60" y="14.45" width="13.45" height="13.45" fill="#1e1e1e"/><rect x="130.05" y="14.45" width="13.45" height="13.45" fill="#000000"/><rect x="0.00" y="28.90" width="13.45" height="13.45" fill="#f4fc2a"/><rect x="14.45" y="28.90" width="13.45" height="13.45" fill="#ffec00"/><rect x="28.90" y="28.90" width="13.45" height="13.45" fill="#fea311"/><rect x="43.35" y="28.90" width="13.45" height="13.45" fill="#fe8c6a"/><rect x="57.80" y="28.90" width="13.45" height="13.45" fill="#fe3c00"/><rect x="72.25" y="28.90" width="13.45" height="13.45" fill="#fe3a26"/><rect x="86.70" y="28.90" width="13.45" height="13.45" fill="#d90000"/><rect x="101.15" y="28.90" width="13.45" height="13.45" fill="#a81e3c"/><rect x="115.60" y="28.90" width="13.45" height="13.45" fill="#7a0022"/><rect x="130.05" y="28.90" width="13.45" height="13.45" fill="#360000"/><rect x="0.00" y="43.35" width="13.45" height="13.45" fill="#f2e2c4"/><rect x="14.45" y="43.35" width="13.45" height="13.45" fill="#ffe4b4"/><rect x="28.90" y="43.35" width="13.45" height="13.45" fill="#ffdcbc"/><rect x="43.35" y="43.35" width="13.45" height="13.45" fill="#ffc491"/><rect x="57.80" y="43.35" width="13.45" height="13.45" fill="#d89660"/><rect x="72.25" y="43.35" width="13.45" height="13.45" fill="#b86844"/><rect x="86.70" y="43.35" width="13.45" height="13.45" fill="#9e432e"/><rect x="101.15" y="43.35" width="13.45" height="13.45" fill="#6c3a30"/><rect x="115.60" y="43.35" width="13.45" height="13.45" fill="#722a3a"/><rect x="130.05" y="43.35" width="13.45" height="13.45" fill="#3a1812"/><rect x="0.00" y="57.80" width="13.45" height="13.45" fill="#f4dca0"/><rect x="14.45" y="57.80" width="13.45" height="13.45" fill="#e8d09c"/><rect x="28.90" y="57.80" width="13.45" height="13.45" fill="#dcc890"/><rect x="43.35" y="57.80" width="13.45" height="13.45" fill="#e89800"/><rect x="57.80" y="57.80" width="13.45" height="13.45" fill="#f4b400"/><rect x="72.25" y="57.80" width="13.45" height="13.45" fill="#e88c00"/><rect x="86.70" y="57.80" width="13.45" height="13.45" fill="#e87800"/><rect x="101.15" y="57.80" width="13.45" height="13.45" fill="#c45400"/><rect x="115.60" y="57.80" width="13.45" height="13.45" fill="#5a3a1e"/><rect x="130.05" y="57.80" width="13.45" height="13.45" fill="#3a2400"/></svg>
<div class="a" style="left:1145.5px;top:61.5px;width:8.5px;height:60.2px;background:#313131;border:1px solid #2a2a2a"></div>
<div class="a" style="left:1146.5px;top:70px;width:6.5px;height:17px;background:#383838;border:1px solid #2b2b2b"></div>
<svg class="a" style="left:1146px;top:62px;" width="8" height="8" viewBox="0 0 8 8"><path d="M1.8 5.2 l2.2 -2.4 l2.2 2.4 z" fill="#c8c8c8"/></svg>
<svg class="a" style="left:1146px;top:113px;" width="8" height="8" viewBox="0 0 8 8"><path d="M1.8 2.8 l2.2 2.4 l2.2 -2.4 z" fill="#c8c8c8"/></svg>
<div class="a" style="left:1001px;top:123.6px;width:152.6px;height:13.2px;background:#1b1b1b;border-radius:2px"></div>
<div class="a" style="left:1142px;top:123.6px;width:11.6px;height:13.2px;background:#323232;border:1px solid #292929;border-radius:0 2px 2px 0"></div>
<div class="a" style="left:1002.6px;top:125px;width:9.8px;height:10.2px;background:#2b3f3b;"></div>
<div class="t" style="left:1014.8px;top:124.8px;font-size:8px;color:#dedede;">Amazon</div>
<svg class="a" style="left:1143.6px;top:127.6px;" width="8" height="6" viewBox="0 0 8 6"><path d="M1.7000000000000002 1.85 h4.6 l-2.3 2.415 z" fill="#bcbcbc"/></svg>
<svg class="a" style="left:1002.5px;top:139.5px;" width="10" height="10" viewBox="0 0 10 10"><rect width="10" height="10" rx="1" fill="#d0d0d0"/><rect x="0.8" y="0.8" width="1.8" height="1.8" fill="#e8e8e8"/><rect x="3.0" y="0.8" width="1.8" height="1.8" fill="#e82020"/><rect x="5.2" y="0.8" width="1.8" height="1.8" fill="#e89020"/><rect x="7.4" y="0.8" width="1.8" height="1.8" fill="#e8e820"/><rect x="0.8" y="3.0" width="1.8" height="1.8" fill="#20c020"/><rect x="3.0" y="3.0" width="1.8" height="1.8" fill="#20c0c0"/><rect x="5.2" y="3.0" width="1.8" height="1.8" fill="#2040e8"/><rect x="7.4" y="3.0" width="1.8" height="1.8" fill="#c020e8"/><rect x="0.8" y="5.2" width="1.8" height="1.8" fill="#e82080"/><rect x="3.0" y="5.2" width="1.8" height="1.8" fill="#802020"/><rect x="5.2" y="5.2" width="1.8" height="1.8" fill="#208020"/><rect x="7.4" y="5.2" width="1.8" height="1.8" fill="#202080"/><rect x="0.8" y="7.4" width="1.8" height="1.8" fill="#e8c020"/><rect x="3.0" y="7.4" width="1.8" height="1.8" fill="#e85020"/><rect x="5.2" y="7.4" width="1.8" height="1.8" fill="#20e880"/><rect x="7.4" y="7.4" width="1.8" height="1.8" fill="#8020e8"/></svg>
<div class="t" style="left:1015.6px;top:139.0px;font-size:8px;color:#dedede;">Default</div>
<svg class="a" style="left:1082px;top:139.5px;" width="10" height="10" viewBox="0 0 10 10"><path d="M5 0.8 v8.4 M0.8 5 h8.4" stroke="#d4d4d4" stroke-width="1.2"/></svg>
<svg class="a" style="left:1097px;top:139.5px;" width="10" height="10" viewBox="0 0 10 10"><path d="M1 9 l0.6 -2.6 l5.2 -5.2 q0.8 -0.6 1.6 0.2 q0.8 0.8 0.2 1.6 l-5.2 5.2 z" fill="none" stroke="#d4d4d4" stroke-width="1"/></svg>
<svg class="a" style="left:1112px;top:139.5px;" width="10" height="10" viewBox="0 0 10 10"><path d="M1 1 h6.6 l1.4 1.4 v6.6 h-8 z" fill="none" stroke="#d4d4d4" stroke-width="1"/><rect x="3" y="1" width="3.6" height="2.6" fill="none" stroke="#d4d4d4" stroke-width="0.9"/><rect x="2.8" y="5.8" width="4.4" height="3.2" fill="none" stroke="#d4d4d4" stroke-width="0.9"/></svg>
<svg class="a" style="left:1126.5px;top:139px;" width="11" height="11" viewBox="0 0 11 11"><rect x="0.8" y="0.8" width="9.4" height="9.4" fill="none" stroke="#d4d4d4" stroke-width="1"/><path d="M3.9 0.8 v9.4 M7.1 0.8 v9.4 M0.8 3.9 h9.4 M0.8 7.1 h9.4" stroke="#d4d4d4" stroke-width="1"/></svg>
<svg class="a" style="left:1142.6px;top:139px;" width="9.0" height="10.5" viewBox="0 0 9 10.5"><path d="M1.4 3.2 h6.2 l-0.5 6.8 h-5.2 z" fill="#d4d4d4"/><rect x="0.6" y="1.4" width="7.8" height="1.2" fill="#d4d4d4"/><rect x="3.2" y="0.3" width="2.6" height="1.2" fill="#d4d4d4"/><path d="M3.3 4.4 v4.6 M5.7 4.4 v4.6" stroke="#323232" stroke-width="0.7"/></svg>
<div class="a" style="left:1073px;top:153.8px;width:1.3px;height:1.3px;background:#6c6c6c;"></div>
<div class="a" style="left:1075px;top:153.8px;width:1.3px;height:1.3px;background:#6c6c6c;"></div>
<div class="a" style="left:1077px;top:153.8px;width:1.3px;height:1.3px;background:#6c6c6c;"></div>
<div class="a" style="left:1079px;top:153.8px;width:1.3px;height:1.3px;background:#6c6c6c;"></div>
<div class="a" style="left:1081px;top:153.8px;width:1.3px;height:1.3px;background:#6c6c6c;"></div>
<div class="a" style="left:1083px;top:153.8px;width:1.3px;height:1.3px;background:#6c6c6c;"></div>
<svg class="a" style="left:999.8px;top:154.7px;" width="12" height="12" viewBox="0 0 12 12"><circle cx="6" cy="6" r="4.5" fill="none" stroke="#d8d8d8" stroke-width="0.9"/><rect x="3.8" y="5.7" width="4.4" height="2.8" rx="0.5" fill="#d8d8d8"/><path d="M4.6 5.9 v-0.8 a1.4 1.4 0 0 1 2.8 0 v0.8" fill="none" stroke="#d8d8d8" stroke-width="0.9"/></svg>
<div class="t" style="left:1014.4px;top:154.9px;font-size:8px;color:#dedede;">Tool Options</div>
<div class="t" style="left:1002.2px;top:172.4px;font-size:8px;color:#dedede;">Brush Smoothing:</div>
<div class="a" style="left:1079.8px;top:171.5px;width:72.6px;height:12.6px;background:#323232;border:1px solid #272727;border-radius:2px;box-shadow:inset 0 1px 0 #3b3b3b"></div>
<div class="t" style="left:1082px;top:172.4px;font-size:8px;color:#dedede;">Weighted</div>
<svg class="a" style="left:1141.7px;top:175.2px;" width="8" height="6" viewBox="0 0 8 6"><path d="M1.7000000000000002 1.85 h4.6 l-2.3 2.415 z" fill="#bcbcbc"/></svg>
<div class="t" style="left:1002.2px;top:189.6px;font-size:8px;color:#dedede;">Distance:</div>
<div class="a" style="left:1079.8px;top:189px;width:64.2px;height:12.2px;background:#1c1c1c;"></div>
<div class="a" style="left:1079.8px;top:189px;width:29.5px;height:12.2px;background:#53728e;"></div>
<div class="t" style="left:1102.8px;top:189.6px;font-size:8px;color:#ececec;">100.0</div>
<div class="a" style="left:1144px;top:189px;width:8px;height:12.2px;background:#323232;border:1px solid #292929;border-left:none;border-radius:0 2px 2px 0"></div>
<svg class="a" style="left:1144px;top:189px;" width="8" height="12.2" viewBox="0 0 8 12.2"><path d="M2.0 4.3919999999999995 l2 -2.2 l2 2.2 z M2.0 7.808 l2 2.2 l2 -2.2 z" fill="#9a9a9a"/></svg>
<div class="t" style="left:1002.2px;top:207.4px;font-size:8px;color:#dedede;">Stroke Ending:</div>
<div class="a" style="left:1079.8px;top:206.3px;width:64px;height:12.2px;background:#53728e;"></div>
<div class="t" style="left:1104.7px;top:207.4px;font-size:8px;color:#ececec;">1.00</div>
<div class="a" style="left:1144px;top:206.3px;width:8px;height:12.2px;background:#323232;border:1px solid #292929;border-left:none;border-radius:0 2px 2px 0"></div>
<svg class="a" style="left:1144px;top:206.3px;" width="8" height="12.2" viewBox="0 0 8 12.2"><path d="M2.0 4.3919999999999995 l2 -2.2 l2 2.2 z M2.0 7.808 l2 2.2 l2 -2.2 z" fill="#9a9a9a"/></svg>
<div class="t" style="left:1002.2px;top:224.3px;font-size:8px;color:#dedede;">Smooth Pressure:</div>
<div class="a" style="left:1079.5px;top:225.8px;width:7.6px;height:7.6px;background:#1c1c1c;border-radius:1px"></div>
<svg class="a" style="left:1079.5px;top:225.8px;" width="7.6" height="7.6" viewBox="0 0 7.6 7.6"><path d="M1.8 3.6 l1.6 2.2 l2.6 -4" fill="none" stroke="#e4e4e4" stroke-width="1"/></svg>
<div class="t" style="left:1002.2px;top:240.6px;font-size:8px;color:#dedede;">Scalable Distance:</div>
<div class="a" style="left:1079.5px;top:242px;width:7.6px;height:7.6px;background:#1c1c1c;border-radius:1px"></div>
<svg class="a" style="left:1079.5px;top:242px;" width="7.6" height="7.6" viewBox="0 0 7.6 7.6"><path d="M1.8 3.6 l1.6 2.2 l2.6 -4" fill="none" stroke="#e4e4e4" stroke-width="1"/></svg>
<div class="a" style="left:1002px;top:256px;width:150.5px;height:1px;background:#474747;"></div>
<div class="a" style="left:1002.7px;top:262.4px;width:7.8px;height:7.8px;background:#1c1c1c;border-radius:1px"></div>
<div class="t" style="left:1013.5px;top:260.8px;font-size:8px;color:#dedede;transform:scaleX(0.9);">Snap to Assistants</div>
<div class="a" style="left:1073.5px;top:278.1px;width:1.3px;height:1.3px;background:#6c6c6c;"></div>
<div class="a" style="left:1075.5px;top:278.1px;width:1.3px;height:1.3px;background:#6c6c6c;"></div>
<div class="a" style="left:1077.5px;top:278.1px;width:1.3px;height:1.3px;background:#6c6c6c;"></div>
<div class="a" style="left:1079.5px;top:278.1px;width:1.3px;height:1.3px;background:#6c6c6c;"></div>
<div class="a" style="left:1081.5px;top:278.1px;width:1.3px;height:1.3px;background:#6c6c6c;"></div>
<div class="a" style="left:1083.5px;top:278.1px;width:1.3px;height:1.3px;background:#6c6c6c;"></div>
<svg class="a" style="left:999.8px;top:278.5px;" width="12" height="12" viewBox="0 0 12 12"><circle cx="6" cy="6" r="4.5" fill="none" stroke="#d8d8d8" stroke-width="0.9"/><rect x="3.8" y="5.7" width="4.4" height="2.8" rx="0.5" fill="#d8d8d8"/><path d="M4.6 5.9 v-0.8 a1.4 1.4 0 0 1 2.8 0 v0.8" fill="none" stroke="#d8d8d8" stroke-width="0.9"/></svg>
<div class="t" style="left:1014px;top:278.9px;font-size:8px;color:#dedede;">Layers</div>
<div class="a" style="left:1001px;top:291.5px;width:132.5px;height:17px;background:#323232;border:1px solid #272727;border-radius:2px;box-shadow:inset 0 1px 0 #3b3b3b"></div>
<div class="t" style="left:1003.6px;top:294.4px;font-size:8px;color:#dedede;">Normal</div>
<svg class="a" style="left:1123.3px;top:297.3px;" width="8" height="6" viewBox="0 0 8 6"><path d="M1.7000000000000002 1.85 h4.6 l-2.3 2.415 z" fill="#bcbcbc"/></svg>
<svg class="a" style="left:1139px;top:294px;" width="12" height="13" viewBox="0 0 12 13"><path d="M1 1 h8.6 l-3.2 4.6 v4.6 l-2.2 -1.2 v-3.4 z" fill="none" stroke="#d4d4d4" stroke-width="1"/><path d="M8.6 11.2 h2.6 l-1.3 1.4 z" fill="#bcbcbc"/></svg>
<div class="a" style="left:1001px;top:311px;width:124px;height:16.8px;background:#53728e;"></div>
<div class="t" style="left:1038.7px;top:314.0px;font-size:8px;color:#ececec;">Opacity: &nbsp;100%</div>
<div class="a" style="left:1125px;top:311px;width:8.5px;height:16.8px;background:#323232;border:1px solid #292929;border-left:none;border-radius:0 2px 2px 0"></div>
<svg class="a" style="left:1125px;top:311px;" width="8.5" height="16.8" viewBox="0 0 8.5 16.8"><path d="M2.25 6.048 l2 -2.2 l2 2.2 z M2.25 10.752 l2 2.2 l2 -2.2 z" fill="#9a9a9a"/></svg>
<svg class="a" style="left:1140px;top:314px;" width="12" height="14" viewBox="0 0 12 14"><path d="M1 2 h7.6 M1 5 h7.6 M1 8 h7.6" stroke="#d4d4d4" stroke-width="1.3"/><path d="M8.6 11 h2.6 l-1.3 1.4 z" fill="#bcbcbc"/></svg>
<div class="a" style="left:1001px;top:330.6px;width:152.5px;height:55px;background:#1c1c1c;"></div>
<div class="a" style="left:1015px;top:347.4px;width:138.5px;height:16px;background:#53728e;"></div>
<div class="a" style="left:998.3px;top:334px;width:1px;height:1px;background:#5c5c5c;"></div>
<div class="a" style="left:998.3px;top:336px;width:1px;height:1px;background:#5c5c5c;"></div>
<div class="a" style="left:998.3px;top:338px;width:1px;height:1px;background:#5c5c5c;"></div>
<div class="a" style="left:998.3px;top:340px;width:1px;height:1px;background:#5c5c5c;"></div>
<div class="a" style="left:998.3px;top:342px;width:1px;height:1px;background:#5c5c5c;"></div>
<svg class="a" style="left:1002.3px;top:335px;" width="10" height="8" viewBox="0 0 10 8"><path d="M0.6 4 q4.4 -5.4 8.8 0 q-4.4 5.4 -8.8 0z" fill="#e0e0e0"/><circle cx="5" cy="4" r="1.9" fill="#1c1c1c"/><circle cx="5" cy="4" r="0.8" fill="#e0e0e0"/></svg>
<svg class="a" style="left:1002.3px;top:351.5px;" width="10" height="8" viewBox="0 0 10 8"><path d="M0.6 4 q4.4 -5.4 8.8 0 q-4.4 5.4 -8.8 0z" fill="#e0e0e0"/><circle cx="5" cy="4" r="1.9" fill="#1c1c1c"/><circle cx="5" cy="4" r="0.8" fill="#e0e0e0"/></svg>
<svg class="a" style="left:1016.4px;top:334.4px;" width="13" height="9.2" viewBox="0 0 14.5 12.6" preserveAspectRatio="none"><rect width="14.5" height="12.6" fill="#fafafa"/><path d="M3 6.5 q4 -2.2 9 0 q-1 2.4 -4.6 2.2 q-3.4 0 -4.4 -2.2z" fill="#8fe3f5"/><path d="M4 7 h3 M8 6 h3" stroke="#10107a" stroke-width="0.9"/><path d="M3.4 4.6 l0.5 -1.6 M10 4.4 l0.4 -1.6 M11 4.4 l0.6 -1.4" stroke="#f5a623" stroke-width="0.8"/></svg>
<svg class="a" style="left:1016.4px;top:351px;" width="13" height="9.2" viewBox="0 0 14.5 12.6" preserveAspectRatio="none"><rect width="14.5" height="12.6" fill="#fafafa"/><path d="M2.4 11 q-0.6 -7 5 -8.4 l6 1.2 v2.4 l-2 4.8 z" fill="#dfeee2"/><path d="M6 7 l7.4 -2 v3 l-3 4 h-6 z" fill="#a9c7b3"/><path d="M5 12.6 l8.4 -6 v4 l-2 2z" fill="#c8b480"/><path d="M4 10 q3 -1 5 1.6 h-4z" fill="#e8cf98"/></svg>
<div class="a" style="left:1031.3px;top:331.0px;width:1px;height:15.8px;background:#2c2c2c;"></div>
<div class="a" style="left:1040.5px;top:331.0px;width:1px;height:15.8px;background:#2c2c2c;"></div>
<svg class="a" style="left:1032.6px;top:332.0px;" width="7" height="7" viewBox="0 0 7 7"><path d="M0.8 0.8 h4.2 q1.4 0 1.4 1.4 v2 l-2.2 2.2 M0.8 0.8 v0.1" fill="none" stroke="#d0d0d0" stroke-width="0.9"/><path d="M6.4 4.2 h-2.2 v2.2" fill="none" stroke="#d0d0d0" stroke-width="0.8"/></svg>
<div class="a" style="left:1031.3px;top:347.59999999999997px;width:1px;height:15.8px;background:#3a4650;"></div>
<div class="a" style="left:1040.5px;top:347.59999999999997px;width:1px;height:15.8px;background:#3a4650;"></div>
<svg class="a" style="left:1032.6px;top:348.59999999999997px;" width="7" height="7" viewBox="0 0 7 7"><path d="M0.8 0.8 h4.2 q1.4 0 1.4 1.4 v2 l-2.2 2.2 M0.8 0.8 v0.1" fill="none" stroke="#d0d0d0" stroke-width="0.9"/><path d="M6.4 4.2 h-2.2 v2.2" fill="none" stroke="#d0d0d0" stroke-width="0.8"/></svg>
<div class="t" style="left:1044.8px;top:333.6px;font-size:8px;color:#e6e6e6;transform:scaleX(0.88);">Paint Layer 1</div>
<div class="t" style="left:1044.8px;top:350.2px;font-size:7.6px;color:#f0f0f0;font-weight:bold;transform:scaleX(0.9);">Background</div>
<div class="a" style="left:1119.5px;top:331px;width:1px;height:16px;background:#2c2c2c;"></div>
<div class="a" style="left:1130.5px;top:331px;width:1px;height:16px;background:#2c2c2c;"></div>
<div class="a" style="left:1141.8px;top:331px;width:1px;height:16px;background:#2c2c2c;"></div>
<svg class="a" style="left:1121px;top:334.5px;" width="8" height="9" viewBox="0 0 8 9"><rect x="0.6" y="4" width="6.6" height="4.4" fill="#5a5a5a"/><path d="M4.6 4 v-1.6 a1.5 1.5 0 0 1 3 0" fill="none" stroke="#5a5a5a" stroke-width="0.9"/></svg>
<svg class="a" style="left:1132px;top:335px;" width="8" height="8" viewBox="0 0 8 8"><path d="M7 1.2 q-1.6 5.6 -4.2 5.6 q-1.8 0 -1.8 -2.6 q0 -2.8 2 -2.8 q2.2 0 3.2 4.6 q0.2 0.8 1 0.8" fill="none" stroke="#5a5a5a" stroke-width="0.9"/></svg>
<svg class="a" style="left:1143.4px;top:334.8px;" width="8.4" height="8.4" viewBox="0 0 8.4 8.4"><rect width="8.4" height="8.4" fill="#5a5a5a" opacity="0.55"/><rect width="2.8" height="2.8" fill="#5a5a5a"/><rect x="5.6" width="2.8" height="2.8" fill="#5a5a5a"/><rect x="2.8" y="2.8" width="2.8" height="2.8" fill="#5a5a5a"/><rect y="5.6" width="2.8" height="2.8" fill="#5a5a5a"/><rect x="5.6" y="5.6" width="2.8" height="2.8" fill="#5a5a5a"/></svg>
<div class="a" style="left:1119.5px;top:347.5px;width:1px;height:16px;background:#46627c;"></div>
<div class="a" style="left:1130.5px;top:347.5px;width:1px;height:16px;background:#46627c;"></div>
<div class="a" style="left:1141.8px;top:347.5px;width:1px;height:16px;background:#46627c;"></div>
<svg class="a" style="left:1121px;top:351.0px;" width="8" height="9" viewBox="0 0 8 9"><rect x="0.6" y="4" width="6.6" height="4.4" fill="#8aa0b6"/><path d="M4.6 4 v-1.6 a1.5 1.5 0 0 1 3 0" fill="none" stroke="#8aa0b6" stroke-width="0.9"/></svg>
<svg class="a" style="left:1132px;top:351.5px;" width="8" height="8" viewBox="0 0 8 8"><path d="M7 1.2 q-1.6 5.6 -4.2 5.6 q-1.8 0 -1.8 -2.6 q0 -2.8 2 -2.8 q2.2 0 3.2 4.6 q0.2 0.8 1 0.8" fill="none" stroke="#8aa0b6" stroke-width="0.9"/></svg>
<svg class="a" style="left:1143.4px;top:351.3px;" width="8.4" height="8.4" viewBox="0 0 8.4 8.4"><rect width="8.4" height="8.4" fill="#8aa0b6" opacity="0.55"/><rect width="2.8" height="2.8" fill="#8aa0b6"/><rect x="5.6" width="2.8" height="2.8" fill="#8aa0b6"/><rect x="2.8" y="2.8" width="2.8" height="2.8" fill="#8aa0b6"/><rect y="5.6" width="2.8" height="2.8" fill="#8aa0b6"/><rect x="5.6" y="5.6" width="2.8" height="2.8" fill="#8aa0b6"/></svg>
<svg class="a" style="left:1004px;top:389.7px;" width="11" height="11" viewBox="0 0 11 11"><path d="M5.5 0.4 v10.2 M0.4 5.5 h10.2" stroke="#d4d4d4" stroke-width="1.2"/></svg>
<svg class="a" style="left:1017.8px;top:393px;" width="8" height="6" viewBox="0 0 8 6"><path d="M1.7000000000000002 1.85 h4.6 l-2.3 2.415 z" fill="#bcbcbc"/></svg>
<svg class="a" style="left:1029.5px;top:389.3px;" width="13" height="12" viewBox="0 0 13 12"><rect x="3.6" y="0.7" width="8.4" height="8" fill="none" stroke="#d4d4d4" stroke-width="1.1"/><path d="M0.8 3 v8.2 h8.6" fill="none" stroke="#d4d4d4" stroke-width="1.1"/></svg>
<svg class="a" style="left:1048.5px;top:391px;" width="13" height="9" viewBox="0 0 13 9"><path d="M0.8 1.4 l5.7 6 l5.7 -6" fill="none" stroke="#d4d4d4" stroke-width="1.2"/></svg>
<svg class="a" style="left:1067.8px;top:391px;" width="13" height="9" viewBox="0 0 13 9"><path d="M0.8 7.6 l5.7 -6 l5.7 6" fill="none" stroke="#d4d4d4" stroke-width="1.2"/></svg>
<svg class="a" style="left:1087px;top:390px;" width="13" height="11" viewBox="0 0 13 11"><path d="M0.4 2 h12.2 M0.4 5.5 h12.2 M0.4 9 h12.2" stroke="#d4d4d4" stroke-width="1.1"/><path d="M8.6 0.4 v3.2 M3.6 3.9 v3.2 M8.6 7.4 v3.2" stroke="#d4d4d4" stroke-width="1.4"/></svg>
<svg class="a" style="left:1139.8px;top:389.6px;" width="10.62" height="12.389999999999999" viewBox="0 0 9 10.5"><path d="M1.4 3.2 h6.2 l-0.5 6.8 h-5.2 z" fill="#d4d4d4"/><rect x="0.6" y="1.4" width="7.8" height="1.2" fill="#d4d4d4"/><rect x="3.2" y="0.3" width="2.6" height="1.2" fill="#d4d4d4"/><path d="M3.3 4.4 v4.6 M5.7 4.4 v4.6" stroke="#323232" stroke-width="0.7"/></svg>
<div class="a" style="left:1073.5px;top:406.1px;width:1.3px;height:1.3px;background:#6c6c6c;"></div>
<div class="a" style="left:1075.5px;top:406.1px;width:1.3px;height:1.3px;background:#6c6c6c;"></div>
<div class="a" style="left:1077.5px;top:406.1px;width:1.3px;height:1.3px;background:#6c6c6c;"></div>
<div class="a" style="left:1079.5px;top:406.1px;width:1.3px;height:1.3px;background:#6c6c6c;"></div>
<div class="a" style="left:1081.5px;top:406.1px;width:1.3px;height:1.3px;background:#6c6c6c;"></div>
<div class="a" style="left:1083.5px;top:406.1px;width:1.3px;height:1.3px;background:#6c6c6c;"></div>
<svg class="a" style="left:999.8px;top:407px;" width="12" height="12" viewBox="0 0 12 12"><circle cx="6" cy="6" r="4.5" fill="none" stroke="#d8d8d8" stroke-width="0.9"/><rect x="3.8" y="5.7" width="4.4" height="2.8" rx="0.5" fill="#d8d8d8"/><path d="M4.6 5.9 v-0.8 a1.4 1.4 0 0 1 2.8 0 v0.8" fill="none" stroke="#d8d8d8" stroke-width="0.9"/></svg>
<div class="t" style="left:1014px;top:407.4px;font-size:8px;color:#dedede;">Brush Presets</div>
<div class="a" style="left:1001px;top:419.2px;width:90.4px;height:12.4px;background:#323232;border:1px solid #272727;border-radius:2px;box-shadow:inset 0 1px 0 #3b3b3b"></div>
<div class="t" style="left:1003.6px;top:420.0px;font-size:8px;color:#dedede;">Paint</div>
<svg class="a" style="left:1081.8px;top:422.8px;" width="8" height="6" viewBox="0 0 8 6"><path d="M1.7000000000000002 1.85 h4.6 l-2.3 2.415 z" fill="#bcbcbc"/></svg>
<div class="a" style="left:1094.4px;top:419.2px;width:30px;height:12.4px;background:#323232;border:1px solid #272727;border-radius:2px;box-shadow:inset 0 1px 0 #3b3b3b"></div>
<svg class="a" style="left:1096.6px;top:421.2px;" width="6" height="9" viewBox="0 0 6 9"><path d="M1 0.6 h4 v7.4 l-2 -1.8 l-2 1.8 z" fill="none" stroke="#d4d4d4" stroke-width="1"/></svg>
<div class="t" style="left:1105.8px;top:420.0px;font-size:8px;color:#dedede;">Tag</div>
<svg class="a" style="left:1119px;top:427px;" width="5" height="3" viewBox="0 0 5 3"><path d="M0.4 0.4 h3.6 l-1.8 2 z" fill="#bcbcbc"/></svg>
<div class="a" style="left:1127.3px;top:419.2px;width:12px;height:12.4px;background:#323232;border:1px solid #272727;border-radius:2px;box-shadow:inset 0 1px 0 #3b3b3b"></div>
<svg class="a" style="left:1129.6px;top:421.6px;" width="8" height="8" viewBox="0 0 8 8"><path d="M0.4 1.4 h7.2 M0.4 4 h7.2 M0.4 6.6 h7.2" stroke="#d4d4d4" stroke-width="1.2"/></svg>
<div class="a" style="left:1142px;top:419.2px;width:11px;height:12.4px;background:#323232;border:1px solid #272727;border-radius:2px;box-shadow:inset 0 1px 0 #3b3b3b"></div>
<svg class="a" style="left:1143.6px;top:421.2px;" width="8" height="9" viewBox="0 0 8 9"><rect x="0.6" y="0.6" width="6.8" height="7.6" fill="none" stroke="#d4d4d4" stroke-width="0.9"/><path d="M4 0.6 v3.4" stroke="#d4d4d4" stroke-width="0.9"/></svg>
<div class="a" style="left:1001px;top:433px;width:143.8px;height:183.2px;background:#1c1c1c;"></div>
<svg class="a" style="left:1001.6px;top:433px" width="107.2" height="183" viewBox="0 2.8 107.2 183"><svg x="0.0" y="0.0" width="34.6" height="34.6" viewBox="0 0 34.6 34.6"><rect width="34.6" height="34.6" fill="#cdcdcd"/><path d="M41.1 -3.9 L39.0 -5.6 L25.0 11.8 L27.1 13.5Z" fill="#e2d2ee"/><path d="M39.0 -5.6 L37.0 -7.2 L23.0 10.2 L25.0 11.8Z" fill="#c4a8de"/><path d="M37.0 -7.2 L35.0 -8.8 L21.0 8.6 L23.0 10.2Z" fill="#d4bfe6"/><path d="M35.0 -8.8 L33.0 -10.4 L19.0 7.0 L21.0 8.6Z" fill="#e4e4e4"/><path d="M33.0 -10.4 L30.9 -12.1 L16.9 5.3 L19.0 7.0Z" fill="#f4f4f4"/><path d="M16.9 5.3 Q6.9 10.1 12.2 14.3 L19.3 20.0 Q24.6 24.3 27.1 13.5Z" fill="#c9b788"/><path d="M10.4 12.9 L21.0 21.5" stroke="#3a3424" stroke-width="1.6" stroke-dasharray="1.2 0.8" opacity=".8"/><g filter="url(#rough2)"><path d="M5 22.4 q2.4 -1.6 4 0 q1.6 -1.2 3 0.2 q1.6 -1 3 0.6 q2 1.6 6 2.4 q6 1 14 0.8 v1.6 q-10 0.8 -18 -0.4 q-8 1.6 -12 -2.2z" fill="#2c2c2c"/></g></svg><svg x="36.2" y="0.0" width="34.6" height="34.6" viewBox="0 0 34.6 34.6"><rect width="34.6" height="34.6" fill="#cdcdcd"/><path d="M42.0 -3.9 L40.0 -5.5 L26.0 11.5 L28.0 13.1Z" fill="#e2d2ee"/><path d="M40.0 -5.5 L38.0 -7.2 L24.0 9.8 L26.0 11.5Z" fill="#c4a8de"/><path d="M38.0 -7.2 L36.0 -8.8 L22.0 8.2 L24.0 9.8Z" fill="#d4bfe6"/><path d="M36.0 -8.8 L34.0 -10.5 L20.0 6.5 L22.0 8.2Z" fill="#e4e4e4"/><path d="M34.0 -10.5 L32.0 -12.1 L18.0 4.9 L20.0 6.5Z" fill="#f4f4f4"/><path d="M18.0 4.9 Q7.9 9.5 13.1 13.8 L20.2 19.6 Q25.4 24.0 28.0 13.1Z" fill="#cbb585"/><g filter="url(#rough2)"><path d="M6 22 q4 -5 9 -1 q4 -1 6 3 q4 3 8 3.4 l6 0.4 v7 h-26 q-4 -6 -3 -12.8z" fill="#222" opacity=".88"/></g></svg><svg x="72.4" y="0.0" width="34.6" height="34.6" viewBox="0 0 34.6 34.6"><rect width="34.6" height="34.6" fill="#cdcdcd"/><path d="M39.6 -6.0 L37.9 -7.3 L24.9 9.7 L26.6 11.0Z" fill="#b87838"/><path d="M37.9 -7.3 L36.1 -8.7 L23.1 8.3 L24.9 9.7Z" fill="#c08a3a"/><path d="M36.1 -8.7 L34.4 -10.0 L21.4 7.0 L23.1 8.3Z" fill="#9a6a2a"/><path d="M21.4 7.0 Q17.7 7.9 20.4 10.0 L24.0 12.8 Q26.7 14.8 26.6 11.0Z" fill="#c4a84a"/><path d="M26.4 6 l-3.6 4.6" stroke="#d8c8a8" stroke-width="6.4"/><path d="M25 8 l-1 1.2" stroke="#5aa8a0" stroke-width="6.4"/><path d="M22 11 q-6 2 -8 5 q-1 3 1 4.6 q4 0.6 7 -3 q2.4 -3 3 -4z" fill="#c4a84a"/><g filter="url(#rough2)"><path d="M9 23 q5 -3 10 0.4 q5 3 9 0.6 q4 -2 7 1 v7 q-6 2 -12 -1.6 q-6 -2 -10 -1 q-5 -2 -4 -6.4z" fill="#1c1c1c" opacity=".92"/></g></svg><svg x="0.0" y="36.2" width="34.6" height="34.6" viewBox="0 0 34.6 34.6"><rect width="34.6" height="34.6" fill="#cdcdcd"/><path d="M36 -3 L30 4.6" stroke="#2c2c2c" stroke-width="4"/><path d="M33.1 5.2 L31.7 4.0 L23.1 14.2 L24.5 15.4Z" fill="#c4a8de"/><path d="M31.7 4.0 L30.3 2.8 L21.7 13.0 L23.1 14.2Z" fill="#d8c4ea"/><path d="M30.3 2.8 L28.9 1.6 L20.3 11.8 L21.7 13.0Z" fill="#f0f0f0"/><path d="M20.3 11.8 Q15.2 14.6 17.4 16.5 L20.4 19.0 Q22.7 20.9 24.5 15.4Z" fill="#cbb585"/><g filter="url(#rough2)" fill="none" stroke="#3a3a3a"><path d="M8 23 q3 4 8 4 q8 0 16 3" stroke-width="2.2"/><path d="M10 21.6 q2 4 7 7 q7 2 14 4" stroke-width="1.4" opacity=".8"/><path d="M12 26 q8 -2 20 1" stroke-width="1" opacity=".7"/></g></svg><svg x="36.2" y="36.2" width="34.6" height="34.6" viewBox="0 0 34.6 34.6"><rect width="34.6" height="34.6" fill="#cdcdcd"/><path d="M40.9 -3.0 L38.9 -4.6 L27.3 9.8 L29.3 11.4Z" fill="#d8c4ea"/><path d="M38.9 -4.6 L37.0 -6.2 L25.4 8.2 L27.3 9.8Z" fill="#c86a7a"/><path d="M37.0 -6.2 L35.0 -7.8 L23.4 6.6 L25.4 8.2Z" fill="#e8e8e8"/><path d="M35.0 -7.8 L33.1 -9.4 L21.5 5.0 L23.4 6.6Z" fill="#6a9a6a"/><path d="M33.1 -9.4 L31.1 -11.0 L19.5 3.4 L21.5 5.0Z" fill="#f4f4f4"/><path d="M19.5 3.4 Q10.8 6.7 15.9 10.9 L22.8 16.4 Q28.0 20.5 29.3 11.4Z" fill="#c9b070"/><path d="M14.2 9.5 L24.5 17.8" stroke="#5a7a4a" stroke-width="1.6" stroke-dasharray="1.2 0.8" opacity=".8"/><g filter="url(#rough2)"><path d="M9 21 q4 -4 8 0 q2 4 6 2.6 q6 -4 12 -1.6 v12.6 h-22 q-6 -6 -4 -13.6z" fill="#1e1e1e" opacity=".9"/></g><circle cx="13" cy="23" r="4.4" fill="#8a8a8a" opacity=".55" filter="url(#b1)"/></svg><svg x="72.4" y="36.2" width="34.6" height="34.6" viewBox="0 0 34.6 34.6"><rect width="34.6" height="34.6" fill="#cdcdcd"/><path d="M8.6 6 q2 2.4 0.9 3.7 q-1.1 0.9 -2 -0.2 q-0.7 -1.1 1.1 -3.5z M6 3.8 q1.1 1.3 0.5 2 q-0.6 0.5 -1.1 -0.1 q-0.4 -0.6 0.6 -1.9z" fill="#4ea6ee"/><path d="M8.4 7.6 q0.8 1 0.4 1.5" stroke="#d8f0ff" stroke-width="0.5" fill="none"/><path d="M37 -3 L28 8" stroke="#6a6a6a" stroke-width="4.4"/><path d="M31.2 8.5 L29.7 7.2 L23.7 14.0 L25.2 15.3Z" fill="#c4a8de"/><path d="M29.7 7.2 L28.3 6.0 L22.3 12.8 L23.7 14.0Z" fill="#e0b8c8"/><path d="M28.3 6.0 L26.8 4.7 L20.8 11.5 L22.3 12.8Z" fill="#f0e8f4"/><path d="M20.8 11.5 Q16.2 13.5 18.4 15.5 L21.5 18.2 Q23.8 20.2 25.2 15.3Z" fill="#a468dc"/><path d="M15.6 14.6 q4 -1.6 6 1 q-0.6 3.6 -4 4 q-3.6 0 -4.6 -2.4z" fill="#a468dc"/><defs><linearGradient id="wg5" x1="0" x2="1"><stop offset="0" stop-color="#a674d8"/><stop offset=".5" stop-color="#a674d8" stop-opacity=".75"/><stop offset="1" stop-color="#ffffff"/></linearGradient></defs><path d="M9 26 q3 6 11 4.4 q8 -2 14.6 -3.4" fill="none" stroke="url(#wg5)" stroke-width="5.5" stroke-linecap="round"/></svg><svg x="0.0" y="72.4" width="34.6" height="34.6" viewBox="0 0 34.6 34.6"><rect width="34.6" height="34.6" fill="#cdcdcd"/><path d="M8.6 6 q2 2.4 0.9 3.7 q-1.1 0.9 -2 -0.2 q-0.7 -1.1 1.1 -3.5z M6 3.8 q1.1 1.3 0.5 2 q-0.6 0.5 -1.1 -0.1 q-0.4 -0.6 0.6 -1.9z" fill="#4ea6ee"/><path d="M8.4 7.6 q0.8 1 0.4 1.5" stroke="#d8f0ff" stroke-width="0.5" fill="none"/><path d="M37 -5 L24.4 10.6" stroke="#8a5a30" stroke-width="4.8"/><path d="M26 8.6 L23.4 11.8" stroke="#c8b898" stroke-width="5.4"/><path d="M24.6 11 q-6 0 -12 5.4 l2 0.6 l-1.4 2 l2.8 -0.4 l-0.4 2.6 l2.6 -1.4 l0.6 2.8 q4.6 -4 6.6 -10.4z" fill="#8a3cd0"/><defs><linearGradient id="wg6" x1="0" x2="1"><stop offset="0" stop-color="#a674d8"/><stop offset=".5" stop-color="#a674d8" stop-opacity=".75"/><stop offset="1" stop-color="#ffffff"/></linearGradient></defs><path d="M9 27 q3 5.4 10 3.4 q8 -2.6 15 -5" fill="none" stroke="url(#wg6)" stroke-width="6" stroke-linecap="round"/></svg><svg x="36.2" y="72.4" width="34.6" height="34.6" viewBox="0 0 34.6 34.6"><rect width="34.6" height="34.6" fill="#cdcdcd"/><path d="M5.6 8.6 a3 3 0 0 1 5.2 -1.6 M11.6 10 a3 3 0 0 1 -5.2 1.6" fill="none" stroke="#5a5a5a" stroke-width="1.1"/><path d="M11.4 5.2 l0 2.2 l-2 -0.4z M5.8 13.4 l0 -2.2 l2 0.4z" fill="#5a5a5a"/><g transform="translate(1,8.6) scale(.9)"><path d="M8.6 6 q2 2.4 0.9 3.7 q-1.1 0.9 -2 -0.2 q-0.7 -1.1 1.1 -3.5z M6 3.8 q1.1 1.3 0.5 2 q-0.6 0.5 -1.1 -0.1 q-0.4 -0.6 0.6 -1.9z" fill="#4ea6ee"/><path d="M8.4 7.6 q0.8 1 0.4 1.5" stroke="#d8f0ff" stroke-width="0.5" fill="none"/></g><path d="M36 -2 L29.4 4.6" stroke="#9a6a2a" stroke-width="3"/><path d="M29.8 4 l-1.6 2" stroke="#d8c070" stroke-width="3.4"/><path d="M28.6 5.4 l-10 8 q-5 4.4 -4.4 7.4 q3.6 1 7.4 -2.8 l8.4 -10.6z" fill="#b8b8b8" stroke="#8a8a8a" stroke-width="0.5"/><defs><linearGradient id="wg7" x1="0" x2="1"><stop offset="0" stop-color="#a674d8"/><stop offset=".5" stop-color="#a674d8" stop-opacity=".75"/><stop offset="1" stop-color="#ffffff"/></linearGradient></defs><path d="M9 25.6 q2.6 6 8 3.6 q4 -3.4 8 -0.6 q4 1 9.6 -2.6" fill="none" stroke="url(#wg7)" stroke-width="5" stroke-linecap="round"/></svg><svg x="72.4" y="72.4" width="34.6" height="34.6" viewBox="0 0 34.6 34.6"><rect width="34.6" height="34.6" fill="#cdcdcd"/><path d="M8.6 6 q2 2.4 0.9 3.7 q-1.1 0.9 -2 -0.2 q-0.7 -1.1 1.1 -3.5z M6 3.8 q1.1 1.3 0.5 2 q-0.6 0.5 -1.1 -0.1 q-0.4 -0.6 0.6 -1.9z" fill="#4ea6ee"/><path d="M8.4 7.6 q0.8 1 0.4 1.5" stroke="#d8f0ff" stroke-width="0.5" fill="none"/><path d="M37.0 -5.0 L26.3 7.8" stroke="#b87030" stroke-width="4.8"/><path d="M26.3 7.8 L22.4 12.4" stroke="#c8b090" stroke-width="5.0"/><path d="M20.4 10.7 Q15.8 12.8 16.6 19.3 Q23.2 18.9 24.4 14.1Z" fill="#3a2420"/><defs><linearGradient id="wg8" x1="0" x2="1"><stop offset="0" stop-color="#a674d8"/><stop offset=".5" stop-color="#a674d8" stop-opacity=".75"/><stop offset="1" stop-color="#ffffff"/></linearGradient></defs><path d="M10 26 q6 5 13 3.4 q6 -1 11.6 -1" fill="none" stroke="url(#wg8)" stroke-width="5.6" stroke-linecap="round"/></svg><svg x="0.0" y="108.6" width="34.6" height="34.6" viewBox="0 0 34.6 34.6"><rect width="34.6" height="34.6" fill="#cdcdcd"/><path d="M8.6 6 q2 2.4 0.9 3.7 q-1.1 0.9 -2 -0.2 q-0.7 -1.1 1.1 -3.5z M6 3.8 q1.1 1.3 0.5 2 q-0.6 0.5 -1.1 -0.1 q-0.4 -0.6 0.6 -1.9z" fill="#4ea6ee"/><path d="M8.4 7.6 q0.8 1 0.4 1.5" stroke="#d8f0ff" stroke-width="0.5" fill="none"/><path d="M37.0 -6.0 L26.8 6.4" stroke="#b89058" stroke-width="4.6"/><path d="M26.8 6.4 L23.0 11.0" stroke="#a8a8a8" stroke-width="4.8"/><path d="M21.0 9.4 Q16.3 11.9 16.6 18.7 Q23.4 17.8 25.0 12.6Z" fill="#4a2c2c"/><ellipse cx="12.6" cy="26.6" rx="5" ry="4.4" fill="#fafafa" filter="url(#b1)"/><defs><linearGradient id="wg9" x1="0" x2="1"><stop offset="0" stop-color="#ffffff"/><stop offset=".5" stop-color="#a8e49a"/><stop offset="1" stop-color="#86dc74"/></linearGradient></defs><path d="M14 29 q8 1.6 20.6 -3.4" fill="none" stroke="url(#wg9)" stroke-width="5" stroke-linecap="round"/></svg><svg x="36.2" y="108.6" width="34.6" height="34.6" viewBox="0 0 34.6 34.6"><rect width="34.6" height="34.6" fill="#cdcdcd"/><path d="M8.6 6 q2 2.4 0.9 3.7 q-1.1 0.9 -2 -0.2 q-0.7 -1.1 1.1 -3.5z M6 3.8 q1.1 1.3 0.5 2 q-0.6 0.5 -1.1 -0.1 q-0.4 -0.6 0.6 -1.9z" fill="#4ea6ee"/><path d="M8.4 7.6 q0.8 1 0.4 1.5" stroke="#d8f0ff" stroke-width="0.5" fill="none"/><path d="M37.0 -6.0 L27.2 6.0" stroke="#3a86c0" stroke-width="5.2"/><path d="M27.2 6.0 L23.4 10.6" stroke="#9ab0b8" stroke-width="5.5"/><path d="M21.2 8.8 Q16.2 11.2 17.1 18.3 Q24.3 17.8 25.6 12.4Z" fill="#4a2c2c"/><circle cx="26.6" cy="7" r="2.6" fill="#8aa0a8" stroke="#5a6a70" stroke-width="0.6"/><g filter="url(#rough2)"><path d="M3 27 q4 -5 9 -1.6 q4 3 8 0 q5 -5 10 -1.6 q3 1 5 -1 v12 h-32z" fill="#8fd47a" opacity=".85"/><path d="M6 29 q4 -2 8 1 q6 2 10 -2 q4 -2 8 1" fill="none" stroke="#f4fff0" stroke-width="2.4" opacity=".9"/></g></svg><svg x="72.4" y="108.6" width="34.6" height="34.6" viewBox="0 0 34.6 34.6"><rect width="34.6" height="34.6" fill="#cdcdcd"/><path d="M8.6 6 q2 2.4 0.9 3.7 q-1.1 0.9 -2 -0.2 q-0.7 -1.1 1.1 -3.5z M6 3.8 q1.1 1.3 0.5 2 q-0.6 0.5 -1.1 -0.1 q-0.4 -0.6 0.6 -1.9z" fill="#4ea6ee"/><path d="M8.4 7.6 q0.8 1 0.4 1.5" stroke="#d8f0ff" stroke-width="0.5" fill="none"/><path d="M37.0 -6.0 L24.8 8.8" stroke="#2a7ab8" stroke-width="3"/><path d="M24.8 8.8 L21.0 13.4" stroke="#d8c0d0" stroke-width="3.2"/><path d="M19.7 12.4 Q16.5 14.2 16.5 18.8 Q21.1 18.0 22.3 14.4Z" fill="#c88a40"/><path d="M8 27.6 q3 -4 7 -0.6 q3 4 8 1 q4 -3 11.6 1" fill="none" stroke="#8fdc7a" stroke-width="4.4" stroke-linecap="round" opacity=".85"/><path d="M8 27.6 q3 -4 7 -0.6 q3 4 8 1 q4 -3 11.6 1" fill="none" stroke="#ffffff" stroke-width="1.6" opacity=".9"/></svg><svg x="0.0" y="144.8" width="34.6" height="34.6" viewBox="0 0 34.6 34.6"><rect width="34.6" height="34.6" fill="#cdcdcd"/><path d="M8.6 6 q2 2.4 0.9 3.7 q-1.1 0.9 -2 -0.2 q-0.7 -1.1 1.1 -3.5z M6 3.8 q1.1 1.3 0.5 2 q-0.6 0.5 -1.1 -0.1 q-0.4 -0.6 0.6 -1.9z" fill="#4ea6ee"/><path d="M8.4 7.6 q0.8 1 0.4 1.5" stroke="#d8f0ff" stroke-width="0.5" fill="none"/><path d="M37.0 -6.0 L25.4 8.3" stroke="#2a7ab8" stroke-width="3.6"/><path d="M25.4 8.3 L21.6 13.0" stroke="#e0c0c8" stroke-width="3.8"/><path d="M20.1 11.8 Q16.3 13.8 16.6 19.2 Q21.9 18.4 23.1 14.2Z" fill="#b88450"/><path d="M7 29 q1 -6 8 -4 q6 3 12 -0.4 q4 -2 8 0" fill="none" stroke="#7ee070" stroke-width="4.6" stroke-linecap="round" opacity=".85"/><path d="M8 29 q1 -5 7 -3.4 q6 3 12 -0.4" fill="none" stroke="#ffffff" stroke-width="1.6" opacity=".9"/></svg><svg x="36.2" y="144.8" width="34.6" height="34.6" viewBox="0 0 34.6 34.6"><rect width="34.6" height="34.6" fill="#cdcdcd"/><rect width="34.6" height="34.6" fill="#8dbbe0"/><rect x="0.7" y="0.7" width="33.2" height="33.2" fill="none" stroke="#4e7cab" stroke-width="1.4"/><path d="M8.6 6 q2 2.4 0.9 3.7 q-1.1 0.9 -2 -0.2 q-0.7 -1.1 1.1 -3.5z M6 3.8 q1.1 1.3 0.5 2 q-0.6 0.5 -1.1 -0.1 q-0.4 -0.6 0.6 -1.9z" fill="#4ea6ee"/><path d="M8.4 7.6 q0.8 1 0.4 1.5" stroke="#d8f0ff" stroke-width="0.5" fill="none"/><path d="M31 4.6 L25 11.4" stroke="#4c8ad4" stroke-width="3.2" stroke-linecap="round"/><path d="M26.6 9 q-7 3.6 -9.4 8.4 q2 2.8 6.4 0 q4 -3.4 5 -6z" fill="#9cd0f0"/><path d="M9 27 q3 -6 12 -6.6" fill="none" stroke="#a8dcf6" stroke-width="5" stroke-linecap="round" filter="url(#b1)"/></svg><svg x="72.4" y="144.8" width="34.6" height="34.6" viewBox="0 0 34.6 34.6"><rect width="34.6" height="34.6" fill="#cdcdcd"/><path d="M8.6 6 q2 2.4 0.9 3.7 q-1.1 0.9 -2 -0.2 q-0.7 -1.1 1.1 -3.5z M6 3.8 q1.1 1.3 0.5 2 q-0.6 0.5 -1.1 -0.1 q-0.4 -0.6 0.6 -1.9z" fill="#4ea6ee"/><path d="M8.4 7.6 q0.8 1 0.4 1.5" stroke="#d8f0ff" stroke-width="0.5" fill="none"/><path d="M36 8 L30 11.4" stroke="#9a6a2a" stroke-width="2.4"/><path d="M30.6 10.6 q-9 -0.6 -18 3.6 q-3 1.6 -2 3 q9 1.4 17.6 -3 z" fill="#f0f0f0" stroke="#7a7a7a" stroke-width="0.6"/><path d="M3 29 q12 4 32 -6 M6 32.6 q12 2 29 -4 M10 25.6 q10 3 25 -6" fill="none" stroke="#f6f6f6" stroke-width="2.4" stroke-linecap="round"/></svg><svg x="0.0" y="181.0" width="34.6" height="34.6" viewBox="0 0 34.6 34.6"><rect width="34.6" height="34.6" fill="#cdcdcd"/><path d="M37 -5 L20 8" stroke="#7a5a30" stroke-width="4.6"/></svg><svg x="36.2" y="181.0" width="34.6" height="34.6" viewBox="0 0 34.6 34.6"><rect width="34.6" height="34.6" fill="#cdcdcd"/><path d="M37 -5 L22 8" stroke="#a86040" stroke-width="4.6"/></svg><svg x="72.4" y="181.0" width="34.6" height="34.6" viewBox="0 0 34.6 34.6"><rect width="34.6" height="34.6" fill="#cdcdcd"/><path d="M37 -5 L22 8" stroke="#8a4a7a" stroke-width="4.6"/><path d="M33 -5 L18 8" stroke="#d8d8d8" stroke-width="2"/></svg></svg>
<div class="a" style="left:1144.8px;top:433px;width:8.8px;height:183.2px;background:#313131;border:1px solid #2a2a2a"></div>
<div class="a" style="left:1145.6px;top:477px;width:7.4px;height:83px;background:#383838;border:1px solid #2b2b2b"></div>
<svg class="a" style="left:1145.2px;top:433.5px;" width="8" height="8" viewBox="0 0 8 8"><path d="M1.8 5.2 l2.2 -2.4 l2.2 2.4 z" fill="#c8c8c8"/></svg>
<svg class="a" style="left:1145.2px;top:607.5px;" width="8" height="8" viewBox="0 0 8 8"><path d="M1.8 2.8 l2.2 2.4 l2.2 -2.4 z" fill="#c8c8c8"/></svg>
<div class="a" style="left:1001px;top:617.3px;width:96.2px;height:12.5px;background:#1b1b1b;border-radius:2px"></div>
<div class="t" style="left:1003px;top:618.4px;font-size:8px;color:#2f3c3c;">Search</div>
<div class="a" style="left:1102px;top:620px;width:7.6px;height:7.6px;background:#1c1c1c;border-radius:1px"></div>
<svg class="a" style="left:1102px;top:620px;" width="7.6" height="7.6" viewBox="0 0 7.6 7.6"><path d="M1.8 3.6 l1.6 2.2 l2.6 -4" fill="none" stroke="#e4e4e4" stroke-width="1"/></svg>
<div class="t" style="left:1113px;top:618.4px;font-size:8px;color:#dedede;">Filter in Tag</div>
<svg class="a" style="left:4px;top:635.5px;" width="12" height="12" viewBox="0 0 12 12"><rect x="0.8" y="0.8" width="10.4" height="10.4" rx="2" fill="none" stroke="#6a6a6a" stroke-width="0.9"/><circle cx="6" cy="6" r="2.8" fill="none" stroke="#6a6a6a" stroke-width="0.9"/></svg>
<div class="t" style="left:23px;top:635.6px;font-size:8px;color:#dedede;transform:scaleX(0.97);">k) Blender Blur</div>
<div class="t" style="left:289px;top:635.6px;font-size:8px;color:#dedede;transform:scaleX(0.98);">RGB/Alpha (8-bit integer/channel) &nbsp;sRGB-elle-V2-srgbtrc.icc</div>
<div class="a" style="left:858px;top:634px;width:87.5px;height:14px;background:#323232;border:1px solid #292929;border-radius:2px"></div>
<div class="t" style="left:859.8px;top:635.6px;font-size:8px;color:#dedede;transform:scaleX(0.96);">3,508 <u>x</u> 2,480 (79.7 MiB)</div>
<svg class="a" style="left:949.5px;top:633.8px;" width="15" height="15" viewBox="0 0 15 15"><circle cx="7.5" cy="7.5" r="7" fill="#1c1c1c"/><path d="M7.5 7.5 h5" stroke="#d0d0d0" stroke-width="0.9"/><circle cx="7.5" cy="7.5" r="0.9" fill="#d0d0d0"/></svg>
<div class="t" style="left:983.6px;top:635.6px;font-size:8px;color:#dedede;transform:scaleX(1);">0.00°</div>
<div class="t" style="left:1057.8px;top:635.6px;font-size:8px;color:#dedede;transform:scaleX(1);">36.1%</div>
<div class="a" style="left:1090.4px;top:640.3px;width:49px;height:1.2px;background:#3e3e3e;"></div>
<div class="a" style="left:1090.4px;top:640.3px;width:13px;height:1.2px;background:#5a82aa;"></div>
<div class="a" style="left:1102.4px;top:637px;width:7.2px;height:7.4px;background:#4a4a4a;border:1px solid #2a2a2a;border-radius:1px"></div>
<div class="a" style="left:1140.5px;top:634px;width:11.2px;height:13px;background:#323232;border:1px solid #242424;border-radius:2px"></div>
<svg class="a" style="left:1142.4px;top:636.4px;" width="7.4" height="8.4" viewBox="0 0 7.4 8.4"><rect x="0.6" y="0.6" width="6.2" height="7.2" fill="none" stroke="#d4d4d4" stroke-width="0.9"/><rect x="2.4" y="3" width="2.6" height="2.4" fill="#d4d4d4"/></svg>
</div></body></html>
